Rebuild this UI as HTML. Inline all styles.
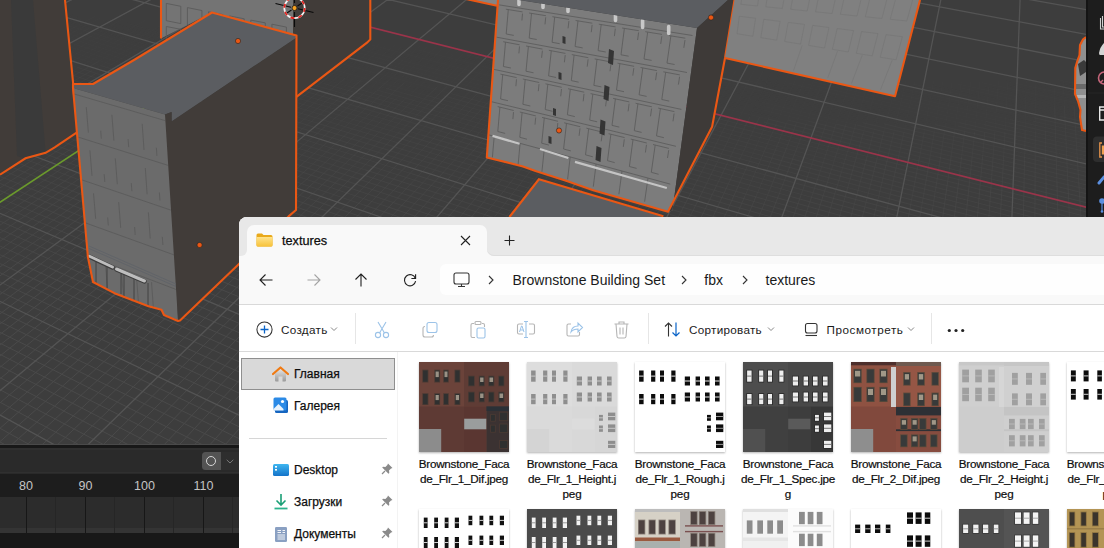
<!DOCTYPE html>
<html><head><meta charset="utf-8">
<style>
*{margin:0;padding:0;box-sizing:border-box}
html,body{width:1104px;height:548px;overflow:hidden;background:#3f3f3f;font-family:"Liberation Sans",sans-serif}
.fn{position:absolute;top:35px;width:40px;margin-left:-20px;text-align:center;color:#c4c4c4;font-size:12.5px;line-height:14px}
.t{position:absolute;white-space:nowrap;color:#0d0d0d;line-height:16px;-webkit-text-stroke:0.25px #0d0d0d}
.tn{-webkit-text-stroke:0 !important;color:#1a1a1a !important}
.lb{position:absolute;width:120px;text-align:center;white-space:nowrap;color:#0d0d0d;font-size:11.7px;letter-spacing:-0.24px;line-height:15px;-webkit-text-stroke:0.2px #0d0d0d}
</style></head><body>
<svg id="vp" width="1104" height="548" viewBox="0 0 1104 548" style="position:absolute;left:0;top:0">
<defs><clipPath id="vpc"><rect x="0" y="0" width="1086" height="444"/></clipPath></defs>
<g clip-path="url(#vpc)">
<rect x="0" y="0" width="1086" height="444" fill="#3d3d3d"/>
<path d="M1082.5 75.6L1107.2 80.6M4.4 12.9L-18.6 23.8M1082.3 78.6L1107.6 83.8M6.4 15.8L-18.4 27.7M1083.3 81.9L1108.0 87.0M7.2 19.4L-19.9 32.5M1057.7 79.7L1108.4 90.2M26.6 14.0L-19.8 36.6M1059.3 83.1L1108.8 93.4M29.7 16.4L-19.7 40.7M1035.4 84.4L1109.6 100.1M49.7 14.6L-19.4 49.1M1006.2 81.4L1107.0 102.8M53.5 16.7L-19.2 53.4M1008.7 85.2L1107.4 106.2M57.4 18.9L-19.1 57.8M981.9 82.7L1107.8 109.6M72.7 15.3L-18.9 62.2M985.0 86.6L1108.3 113.1M77.1 17.3L-18.8 66.8M957.3 83.9L1108.7 116.6M81.5 19.2L6.4 58.3M960.8 87.9L1084.4 114.8M95.6 16.1L4.4 64.1M933.2 85.2L1084.3 118.3M100.4 17.9L5.5 68.3M911.8 83.8L1060.4 116.5M90.7 27.5L24.3 63.0M885.8 84.7L1033.7 117.7M123.0 19.0L51.7 57.8M882.3 87.3L1032.8 121.1M113.3 28.8L46.9 65.3M861.5 86.0L1009.7 119.5M117.9 30.9L49.3 69.0M832.6 82.9L1008.5 122.8M146.1 19.8L75.3 59.5M813.1 81.9L985.9 121.4M136.0 30.2L69.6 67.7M807.9 84.1L984.0 124.6M140.9 32.2L72.4 71.2M786.7 82.7L959.2 122.6M169.2 20.7L98.8 61.3M757.0 79.3L957.2 125.9M158.7 31.7L92.3 70.3M738.4 78.5L935.5 124.6M163.8 33.6L95.5 73.7M713.9 79.7L911.4 126.6M180.7 33.6L113.8 73.6M683.4 76.0L883.8 123.8M186.0 35.5L140.3 63.1M664.7 75.1L862.5 122.6M198.0 33.4L132.7 73.2M632.1 70.8L856.9 125.1M203.5 35.2L136.6 76.4M614.8 70.1L836.4 124.1M215.0 33.3L151.1 73.1M583.3 66.0L808.0 121.1M220.6 35.1L155.2 76.2M565.5 65.2L787.5 120.0M226.2 36.9L181.6 65.3M549.0 64.8L768.0 119.1M237.5 35.2L173.5 76.3M517.2 60.4L763.8 122.1M243.2 36.9L177.8 79.4M466.6 54.9L712.7 117.3M260.0 37.1L195.8 79.7M451.0 54.6L694.0 116.6M265.9 38.9L222.2 68.2M418.4 49.9L664.5 113.1M276.1 37.7L212.7 80.8M402.0 49.3L645.5 112.3M282.1 39.5L238.9 69.1M369.0 44.4L615.4 108.6M292.6 38.1L230.2 81.5M354.1 44.2L597.6 108.0M298.6 39.9L235.0 84.5M319.5 38.7L591.0 110.4M309.0 38.6L247.4 82.3M305.0 38.5L548.9 103.4M315.1 40.4L252.4 85.4M295.0 39.5L540.9 105.4M325.2 39.2L264.5 83.4M245.5 33.6L491.8 100.6M337.6 42.8L295.7 74.0M231.4 33.5L450.6 93.5M347.6 41.7L286.7 87.7M197.1 27.9L443.5 95.8M353.8 43.5L312.6 75.0M182.2 27.5L426.1 95.3M363.7 42.5L303.5 89.1M168.5 27.4L385.7 88.2M369.6 44.7L328.6 76.8M157.9 28.3L376.8 90.0M379.3 43.8L319.5 91.3M127.0 23.3L347.5 86.0M385.7 45.6L345.2 78.2M103.2 20.4L323.7 83.5M395.3 44.8L336.1 93.1M102.7 24.1L298.9 80.7M401.7 46.7L361.7 79.8M52.4 17.2L268.5 80.5M420.6 45.4L363.4 94.0M53.2 21.3L245.3 78.1M427.1 47.2L388.4 80.6M29.4 18.2L225.2 76.5M436.4 46.7L379.6 96.3M5.8 15.1L201.5 73.9M443.0 48.6L404.6 82.6M4.6 18.8L172.4 69.6M451.7 48.6L394.9 99.7M-18.5 15.8L173.2 74.3M460.4 48.6L404.5 99.7M-19.2 19.6L148.7 71.3M469.1 48.6L414.0 99.7M-19.9 23.6L124.2 68.3M475.1 51.2L437.6 86.5M-19.0 28.0L101.0 65.6M483.8 51.2L446.9 86.5M-18.8 36.7L76.9 67.2M501.3 51.2L447.7 104.2M-19.5 40.9L52.4 64.0M507.3 53.9L470.8 90.6M-18.6 45.7L29.3 61.2M516.1 53.9L480.2 90.6M-19.3 50.0L28.6 65.7M524.9 53.9L489.6 90.6M-18.4 55.0L5.5 62.9M533.7 54.0L499.0 90.7M542.5 54.0L491.3 109.0M548.6 56.9L513.8 95.1M557.4 56.9L523.2 95.1M566.3 56.9L532.7 95.1M584.0 57.0L551.6 95.2M590.2 60.2L557.1 100.0M599.0 60.2L566.7 100.0M607.9 60.2L576.2 100.0M616.8 60.2L585.8 100.0M625.7 60.2L595.3 100.0M632.0 63.7L601.0 105.2M641.0 63.7L610.6 105.2M650.3 63.2L620.6 104.8M654.0 84.0L639.9 104.8M674.7 67.0L645.7 110.5M683.7 67.0L655.5 110.5M692.7 67.0L665.2 110.5M701.7 67.0L674.9 110.5M710.7 67.1L684.6 110.6M719.7 67.1L694.4 110.6M726.4 71.2L700.6 116.8M735.5 71.2L710.4 116.8M753.6 71.3L730.1 116.9M762.7 71.3L739.9 116.9M771.8 71.3L749.8 116.9M780.9 71.3L759.6 116.9M790.0 71.3L769.4 116.9M797.1 75.9L776.3 123.8M806.2 75.9L786.2 123.8M815.4 75.9L796.2 123.8M824.6 75.9L806.2 123.8M842.9 76.0L826.1 123.9M852.1 76.0L836.0 123.9M861.2 76.0L846.0 123.9M870.4 76.0L855.9 123.9M878.1 81.1L863.7 131.5M887.4 81.1L873.8 131.5M896.6 81.1L883.9 131.5M905.9 81.1L894.0 131.6M915.1 81.1L904.1 131.6M933.6 81.2L924.3 131.6M942.9 81.2L934.3 131.6M952.2 81.2L944.4 131.7M961.4 81.2L954.5 131.7M970.7 81.2L964.6 131.7M979.9 81.2L974.7 131.7M989.2 81.2L984.8 131.7M998.4 81.3L994.9 131.7M1007.7 81.3L1005.0 131.8M1026.2 80.7L1025.2 130.9M1035.5 80.7L1035.3 131.0M1044.8 80.8L1045.4 131.0M1054.0 80.8L1054.7 105.9M1063.3 80.8L1064.4 105.9M1072.5 80.8L1074.1 105.9M1081.9 82.3L1083.9 107.8M1091.0 80.0L1093.3 104.9M1101.0 87.6L1104.0 114.4" stroke="#4a4a4a" stroke-opacity="0.125" stroke-width="1" fill="none"/>
<path d="M6.4 58.3L-18.6 71.4M1084.4 114.8L1109.1 120.2M4.4 64.1L-18.4 76.1M1084.3 118.3L1109.5 123.8M5.5 68.3L-18.3 80.8M1060.4 116.5L1110.0 127.5M24.3 63.0L-19.9 86.7M1033.7 117.7L1107.6 134.2M51.7 57.8L-19.6 96.7M1032.8 121.1L1108.1 138.0M46.9 65.3L-19.5 101.8M1009.7 119.5L1108.5 141.8M49.3 69.0L-19.3 107.0M1008.5 122.8L1108.9 145.7M75.3 59.5L4.5 99.1M985.9 121.4L1109.4 149.6M69.6 67.7L3.2 105.2M984.0 124.6L1084.7 147.8M72.4 71.2L4.0 110.2M959.2 122.6L1082.4 151.1M98.8 61.3L28.3 101.8M957.2 125.9L1082.4 155.0M92.3 70.3L25.8 108.9M935.5 124.6L1058.6 153.4M95.5 73.7L50.0 100.4M911.4 126.6L1034.8 155.8M113.8 73.6L69.3 100.3M883.8 123.8L1009.0 153.7M140.3 63.1L71.7 104.6M862.5 122.6L1010.8 158.2M132.7 73.2L67.5 113.1M856.9 125.1L981.8 155.3M136.6 76.4L92.0 103.9M836.4 124.1L984.1 160.0M151.1 73.1L87.2 112.9M808.0 121.1L957.8 157.8M155.2 76.2L111.7 103.7M787.5 120.0L935.5 156.5M181.6 65.3L114.8 107.8M768.0 119.1L938.3 161.4M173.5 76.3L130.8 103.7M763.8 122.1L911.8 159.1M177.8 79.4L134.2 107.8M712.7 117.3L885.0 160.9M195.8 79.7L153.1 108.1M694.0 116.6L864.0 159.9M222.2 68.2L156.7 112.1M664.5 113.1L861.3 163.6M212.7 80.8L170.4 109.5M645.5 112.3L840.2 162.6M238.9 69.1L174.3 113.5M615.4 108.6L812.6 159.9M230.2 81.5L188.6 110.3M597.6 108.0L792.4 159.1M235.0 84.5L192.6 114.3M591.0 110.4L763.8 156.0M247.4 82.3L206.4 111.5M548.9 103.4L744.1 155.3M252.4 85.4L210.7 115.4M540.9 105.4L737.7 158.1M264.5 83.4L224.1 112.8M491.8 100.6L688.9 154.1M295.7 74.0L232.9 120.8M450.6 93.5L669.8 153.6M286.7 87.7L246.0 118.3M443.5 95.8L640.6 150.2M312.6 75.0L250.6 122.4M426.1 95.3L621.3 149.5M303.5 89.1L263.4 120.2M385.7 88.2L603.0 149.0M328.6 76.8L267.1 125.0M376.8 90.0L571.3 144.9M319.5 91.3L279.6 123.0M347.5 86.0L567.9 148.6M345.2 78.2L284.4 127.1M323.7 83.5L544.1 146.6M336.1 93.1L296.6 125.3M298.9 80.7L519.5 144.4M361.7 79.8L301.6 129.5M268.5 80.5L460.6 136.9M363.4 94.0L325.2 126.5M245.3 78.1L437.4 134.8M388.4 80.6L330.3 130.7M225.2 76.5L420.9 134.8M379.6 96.3L341.8 129.5M201.5 73.9L397.2 132.6M404.6 82.6L347.0 133.7M172.4 69.6L364.1 127.6M394.9 99.7L357.1 133.7M173.2 74.3L340.9 125.4M404.5 99.7L367.2 133.8M148.7 71.3L316.7 123.0M414.0 99.7L377.3 133.8M124.2 68.3L292.3 120.4M437.6 86.5L381.4 139.5M101.0 65.6L293.1 125.7M446.9 86.5L391.5 139.5M76.9 67.2L244.5 120.5M447.7 104.2L411.9 139.5M52.4 64.0L220.1 117.8M470.8 90.6L434.3 127.3M29.3 61.2L197.0 115.5M480.2 90.6L444.3 127.3M28.6 65.7L172.6 112.7M489.6 90.6L454.3 127.4M5.5 62.9L149.4 110.3M499.0 90.7L446.9 145.7M-19.2 59.5L148.9 115.3M491.3 109.0L457.2 145.7M-19.9 64.1L124.3 112.4M513.8 95.1L478.9 133.3M-19.0 69.3L100.7 109.8M523.2 95.1L489.0 133.3M-19.7 74.0L76.1 106.7M532.7 95.1L499.1 133.3M-19.5 84.4L52.4 109.4M551.6 95.2L519.3 133.4M-18.6 90.0L29.3 106.8M557.1 100.0L524.1 139.7M-19.3 95.1L4.5 103.5M566.7 100.0L534.3 139.8M576.2 100.0L544.5 139.8M585.8 100.0L554.7 139.8M595.3 100.0L564.9 139.8M601.0 105.2L569.9 146.8M610.6 105.2L580.3 146.8M620.6 104.8L590.9 146.4M639.9 104.8L611.5 146.4M645.7 110.5L616.8 154.0M655.5 110.5L627.2 154.0M665.2 110.5L637.7 154.0M674.9 110.5L648.1 154.0M684.6 110.6L658.6 154.1M694.4 110.6L669.0 154.1M700.6 116.8L674.8 162.4M710.4 116.8L685.4 162.4M730.1 116.9L706.5 162.5M739.9 116.9L717.1 162.5M749.8 116.9L727.7 162.5M759.6 116.9L738.3 162.5M769.4 116.9L748.9 162.5M776.3 123.8L765.9 147.7M786.2 123.8L776.3 147.8M796.2 123.8L786.6 147.8M806.2 123.8L797.0 147.8M826.1 123.9L809.2 171.8M836.0 123.9L820.0 171.8M846.0 123.9L830.7 171.8M855.9 123.9L841.5 171.8M863.7 131.5L856.5 156.7M873.8 131.5L867.0 156.8M883.9 131.5L877.5 156.8M894.0 131.6L888.0 156.8M904.1 131.6L898.5 156.8M924.3 131.6L919.6 156.8M934.3 131.6L930.1 156.9M944.4 131.7L940.6 156.9M954.5 131.7L951.1 156.9M964.6 131.7L961.6 156.9M974.7 131.7L972.1 156.9M984.8 131.7L982.6 157.0M994.9 131.7L993.1 157.0M1005.0 131.8L1003.6 157.0M1025.2 130.9L1024.7 156.1M1035.3 131.0L1035.2 156.1M1045.4 131.0L1045.7 156.1M1054.7 105.9L1056.2 156.1M1064.4 105.9L1066.7 156.1M1074.1 105.9L1077.2 156.2M1083.9 107.8L1087.9 158.8M1093.3 104.9L1098.0 154.7M1104.0 114.4L1107.0 141.2" stroke="#4a4a4a" stroke-opacity="0.250" stroke-width="1" fill="none"/>
<path d="M4.5 99.1L-19.1 112.3M3.2 105.2L-19.0 117.7M1084.7 147.8L1109.8 153.6M4.0 110.2L-18.8 123.3M1082.4 151.1L1107.0 156.8M28.3 101.8L-18.6 128.9M1082.4 155.0L1107.4 160.9M25.8 108.9L-18.4 134.6M1058.6 153.4L1107.9 165.0M50.0 100.4L-18.3 140.4M1034.8 155.8L1108.8 173.4M69.3 100.3L2.4 140.3M1009.0 153.7L1109.3 177.7M71.7 104.6L3.1 146.0M1010.8 158.2L1109.7 182.0M67.5 113.1L23.9 139.6M981.8 155.3L1106.7 185.6M92.0 103.9L25.2 145.1M984.1 160.0L1082.6 184.0M87.2 112.9L23.4 152.7M957.8 157.8L1082.7 188.4M111.7 103.7L46.3 144.8M935.5 156.5L1058.8 186.9M114.8 107.8L48.0 150.3M938.3 161.4L1060.0 191.6M130.8 103.7L66.7 144.9M911.8 159.1L1035.1 189.9M134.2 107.8L68.8 150.3M885.0 160.9L1008.0 192.1M153.1 108.1L88.9 150.7M864.0 159.9L985.5 190.9M156.7 112.1L91.3 156.1M861.3 163.6L984.4 195.2M170.4 109.5L106.9 152.5M840.2 162.6L961.9 194.1M174.3 113.5L109.6 157.9M812.6 159.9L935.9 192.0M188.6 110.3L126.1 153.7M792.4 159.1L938.5 197.4M192.6 114.3L129.0 159.0M763.8 156.0L911.9 195.2M206.4 111.5L144.9 155.2M744.1 155.3L890.4 194.2M210.7 115.4L148.1 160.4M737.7 158.1L885.3 197.7M224.1 112.8L163.4 157.0M688.9 154.1L836.7 194.3M232.9 120.8L191.1 152.0M669.8 153.6L815.9 193.6M246.0 118.3L205.4 149.0M640.6 150.2L813.1 197.7M250.6 122.4L209.3 153.9M621.3 149.5L792.1 196.9M263.4 120.2L223.3 151.2M603.0 149.0L771.9 196.3M267.1 125.0L226.1 157.2M571.3 144.9L741.6 192.9M279.6 123.0L239.7 154.7M567.9 148.6L714.9 190.4M284.4 127.1L243.9 159.8M544.1 146.6L715.6 195.7M296.6 125.3L257.1 157.5M519.5 144.4L691.2 193.9M301.6 129.5L261.5 162.6M460.6 136.9L628.8 186.1M325.2 126.5L287.0 158.9M437.4 134.8L605.4 184.5M330.3 130.7L291.6 164.1M420.9 134.8L592.2 185.8M341.8 129.5L303.9 162.6M397.2 132.6L568.4 184.0M347.0 133.7L308.6 167.8M364.1 127.6L555.9 185.6M357.1 133.7L319.3 167.8M340.9 125.4L532.6 183.9M367.2 133.8L329.9 167.8M316.7 123.0L508.6 182.0M377.3 133.8L340.6 167.8M292.3 120.4L484.5 180.0M381.4 139.5L343.9 174.8M293.1 125.7L461.2 178.2M391.5 139.5L354.6 174.8M244.5 120.5L412.0 173.8M411.9 139.5L376.2 174.9M220.1 117.8L387.9 171.6M434.3 127.3L397.8 164.0M197.0 115.5L364.7 169.7M444.3 127.3L408.4 164.0M172.6 112.7L340.5 167.5M454.3 127.4L419.0 164.1M149.4 110.3L317.3 165.5M446.9 145.7L412.2 182.4M148.9 115.3L293.0 163.2M457.2 145.7L423.1 182.5M124.3 112.4L268.6 160.8M478.9 133.3L444.1 171.5M100.7 109.8L244.3 158.3M489.0 133.3L454.8 171.5M76.1 106.7L219.9 155.8M499.1 133.3L465.5 171.5M52.4 109.4L196.2 159.4M519.3 133.4L487.0 171.5M29.3 106.8L173.0 157.2M524.1 139.7L491.1 179.5M4.5 103.5L147.7 154.3M534.3 139.8L501.9 179.5M-18.3 100.9L124.7 152.1M544.5 139.8L512.8 179.6M-19.1 106.2L100.2 149.3M554.7 139.8L523.6 179.6M-19.9 111.6L75.6 146.5M564.9 139.8L534.5 179.6M-18.9 117.8L52.3 144.1M569.9 146.8L538.9 188.3M-19.7 123.5L51.5 150.0M580.3 146.8L549.9 188.3M-18.7 129.9L28.8 147.7M590.9 146.4L561.2 188.0M611.5 146.4L583.2 188.0M616.8 154.0L602.3 175.7M627.2 154.0L599.0 197.5M637.7 154.0L610.2 197.5M648.1 154.0L621.4 197.5M658.6 154.1L632.5 197.6M669.0 154.1L643.7 197.6M674.8 162.4L661.9 185.2M685.4 162.4L672.8 185.2M706.5 162.5L694.8 185.2M717.1 162.5L705.7 185.3M727.7 162.5L716.7 185.3M738.3 162.5L727.7 185.3M748.9 162.5L738.6 185.3M765.9 147.7L745.1 195.6M776.3 147.8L756.3 195.6M786.6 147.8L767.4 195.7M797.0 147.8L778.5 195.7M809.2 171.8L800.8 195.7M820.0 171.8L812.0 195.8M830.7 171.8L823.1 195.8M841.5 171.8L834.2 195.8M856.5 156.7L842.2 207.2M867.0 156.8L853.5 207.2M877.5 156.8L864.8 207.2M888.0 156.8L876.2 207.2M898.5 156.8L887.5 207.3M919.6 156.8L910.2 207.3M930.1 156.9L921.5 207.3M940.6 156.9L932.8 207.4M951.1 156.9L947.6 182.1M961.6 156.9L958.6 182.2M972.1 156.9L969.5 182.2M982.6 157.0L980.4 182.2M993.1 157.0L991.3 182.2M1003.6 157.0L1002.3 182.3M1024.7 156.1L1024.1 181.2M1035.2 156.1L1035.1 181.2M1045.7 156.1L1046.0 181.2M1056.2 156.1L1056.9 181.2M1066.7 156.1L1067.8 181.2M1077.2 156.2L1078.7 181.3M1087.9 158.8L1089.9 184.3M1098.0 154.7L1100.4 179.6M1107.0 141.2L1110.0 168.0" stroke="#4a4a4a" stroke-opacity="0.375" stroke-width="1" fill="none"/>
<path d="M2.4 140.3L-19.9 153.7M3.1 146.0L-19.8 159.9M23.9 139.6L-19.6 166.2M25.2 145.1L-19.4 172.6M1082.6 184.0L1107.2 190.0M23.4 152.7L-19.2 179.2M1082.7 188.4L1107.7 194.5M46.3 144.8L-19.0 185.9M1058.8 186.9L1108.1 199.1M48.0 150.3L3.4 178.6M1060.0 191.6L1108.6 203.7M66.7 144.9L2.7 186.1M1035.1 189.9L1109.1 208.4M68.8 150.3L3.3 192.8M1008.0 192.1L1106.5 217.0M88.9 150.7L24.7 193.3M985.5 190.9L1082.7 215.7M91.3 156.1L47.6 185.4M984.4 195.2L1082.8 220.5M106.9 152.5L64.6 181.2M961.9 194.1L1059.2 219.3M109.6 157.9L66.5 187.5M935.9 192.0L1059.1 224.1M126.1 153.7L84.5 182.6M938.5 197.4L1035.9 222.9M129.0 159.0L86.6 188.7M911.9 195.2L1010.7 221.2M144.9 155.2L103.9 184.3M890.4 194.2L1012.4 226.7M148.1 160.4L106.3 190.4M885.3 197.7L983.7 224.0M163.4 157.0L122.9 186.4M836.7 194.3L959.9 227.8M191.1 152.0L128.3 198.8M815.9 193.6L937.7 226.9M205.4 149.0L144.5 195.0M813.1 197.7L936.3 231.7M209.3 153.9L147.4 201.3M792.1 196.9L914.1 230.8M223.3 151.2L163.1 197.8M771.9 196.3L892.6 230.1M226.1 157.2L185.1 189.3M741.6 192.9L887.5 234.0M239.7 154.7L179.8 202.3M714.9 190.4L861.9 232.2M243.9 159.8L203.4 192.4M715.6 195.7L838.0 230.8M257.1 157.5L217.6 189.7M691.2 193.9L813.8 229.3M261.5 162.6L221.4 195.7M628.8 186.1L772.9 228.4M287.0 158.9L248.8 191.4M605.4 184.5L749.5 227.1M291.6 164.1L252.9 197.4M592.2 185.8L739.0 229.6M303.9 162.6L266.0 195.7M568.4 184.0L715.2 228.1M308.6 167.8L270.2 201.8M555.9 185.6L699.7 229.1M319.3 167.8L281.4 201.9M532.6 183.9L676.4 227.8M329.9 167.8L292.7 201.9M508.6 182.0L652.5 226.3M340.6 167.8L303.9 201.9M484.5 180.0L628.6 224.7M343.9 174.8L306.4 210.1M461.2 178.2L605.3 223.3M354.6 174.8L317.7 210.2M412.0 173.8L555.7 219.5M376.2 174.9L340.4 210.2M387.9 171.6L531.7 217.7M397.8 164.0L361.3 200.7M364.7 169.7L508.5 216.3M408.4 164.0L372.5 200.7M340.5 167.5L484.4 214.5M419.0 164.1L383.7 200.8M317.3 165.5L461.2 212.9M412.2 182.4L394.9 200.8M293.0 163.2L437.0 211.1M423.1 182.5L389.0 219.2M268.6 160.8L412.8 209.1M444.1 171.5L409.2 209.6M244.3 158.3L387.9 206.9M454.8 171.5L420.6 209.7M219.9 155.8L363.7 204.9M465.5 171.5L431.9 209.7M196.2 159.4L316.0 201.0M487.0 171.5L454.6 209.7M173.0 157.2L292.8 199.2M491.1 179.5L458.1 219.3M147.7 154.3L290.8 205.0M501.9 179.5L469.6 219.3M124.7 152.1L267.7 203.3M512.8 179.6L481.1 219.4M100.2 149.3L243.3 201.0M523.6 179.6L492.6 219.4M75.6 146.5L218.9 198.7M534.5 179.6L504.1 219.4M52.3 144.1L194.7 196.5M538.9 188.3L523.4 209.0M51.5 150.0L170.3 194.1M549.9 188.3L534.7 209.1M28.8 147.7L147.4 192.3M561.2 188.0L531.5 229.6M-18.5 142.4L99.5 187.7M583.2 188.0L554.8 229.6M-19.3 148.5L75.1 185.1M602.3 175.7L573.4 219.2M-18.2 155.5L76.0 192.4M599.0 197.5L584.9 219.2M-19.1 161.9L51.2 189.7M610.2 197.5L596.5 219.3M-20.0 168.4L26.9 187.1M621.4 197.5L608.0 219.3M-18.8 175.8L4.6 185.3M632.5 197.6L619.5 219.3M643.7 197.6L631.0 219.3M661.9 185.2L636.1 230.8M672.8 185.2L647.8 230.8M694.8 185.2L671.2 230.8M705.7 185.3L682.9 230.9M716.7 185.3L694.6 230.9M727.7 185.3L706.4 230.9M738.6 185.3L718.1 230.9M745.1 195.6L734.7 219.6M756.3 195.6L746.3 219.6M767.4 195.7L757.8 219.6M778.5 195.7L769.3 219.6M800.8 195.7L792.4 219.7M812.0 195.8L803.9 219.7M823.1 195.8L815.5 219.7M834.2 195.8L827.0 219.8M842.2 207.2L835.0 232.4M853.5 207.2L846.7 232.4M864.8 207.2L858.5 232.4M876.2 207.2L870.2 232.5M887.5 207.3L882.0 232.5M910.2 207.3L905.5 232.5M921.5 207.3L917.2 232.6M932.8 207.4L929.0 232.6M947.6 182.1L940.7 232.6M958.6 182.2L952.5 232.6M969.5 182.2L964.3 232.7M980.4 182.2L976.0 232.7M991.3 182.2L987.8 232.7M1002.3 182.3L999.5 232.7M1024.1 181.2L1023.1 231.4M1035.1 181.2L1034.8 231.4M1046.0 181.2L1046.6 231.4M1056.9 181.2L1058.3 231.5M1067.8 181.2L1070.1 231.5M1078.7 181.3L1081.8 231.5M1089.9 184.3L1091.9 209.7M1100.4 179.6L1102.8 204.5" stroke="#4a4a4a" stroke-opacity="0.500" stroke-width="1" fill="none"/>
<path d="M3.4 178.6L-18.9 192.8M2.7 186.1L-18.7 199.8M3.3 192.8L-18.5 206.9M24.7 193.3L-18.1 221.7M1082.7 215.7L1106.9 221.9M47.6 185.4L-17.8 229.3M1082.8 220.5L1107.4 226.8M64.6 181.2L1.2 224.3M1059.2 219.3L1107.9 231.8M66.5 187.5L1.8 231.8M1059.1 224.1L1108.4 236.9M84.5 182.6L22.1 225.9M1035.9 222.9L1108.9 242.1M86.6 188.7L44.3 218.5M1010.7 221.2L1109.4 247.3M103.9 184.3L42.4 228.0M1012.4 226.7L1110.0 252.6M106.3 190.4L64.6 220.4M983.7 224.0L1082.1 250.4M122.9 186.4L62.2 230.6M959.9 227.8L1058.4 254.6M128.3 198.8L86.4 230.0M937.7 226.9L1035.1 253.6M144.5 195.0L103.9 225.6M936.3 231.7L1034.8 258.9M147.4 201.3L106.1 232.8M914.1 230.8L1011.7 257.9M163.1 197.8L122.9 228.9M892.6 230.1L989.1 257.1M185.1 189.3L123.6 237.5M887.5 234.0L984.8 261.5M179.8 202.3L139.9 234.0M861.9 232.2L959.9 260.0M203.4 192.4L162.8 225.0M838.0 230.8L936.0 258.8M217.6 189.7L158.4 238.0M813.8 229.3L936.4 264.6M221.4 195.7L181.3 228.9M772.9 228.4L893.0 263.6M248.8 191.4L191.5 240.1M749.5 227.1L869.6 262.5M252.9 197.4L214.1 230.8M739.0 229.6L861.3 266.0M266.0 195.7L228.2 228.8M715.2 228.1L837.5 264.8M270.2 201.8L231.8 235.9M699.7 229.1L819.5 265.4M281.4 201.9L243.6 235.9M676.4 227.8L796.2 264.4M292.7 201.9L255.4 236.0M652.5 226.3L772.5 263.2M303.9 201.9L267.2 236.0M628.6 224.7L748.7 261.9M306.4 210.1L268.9 245.5M605.3 223.3L725.3 260.8M317.7 210.2L280.8 245.5M555.7 219.5L699.3 265.1M340.4 210.2L304.7 245.5M531.7 217.7L675.5 263.9M361.3 200.7L324.7 237.4M508.5 216.3L652.2 262.8M372.5 200.7L336.5 237.4M484.4 214.5L628.3 261.5M383.7 200.8L348.3 237.5M461.2 212.9L605.1 260.3M394.9 200.8L360.1 237.5M437.0 211.1L581.1 258.9M389.0 219.2L372.0 237.5M412.8 209.1L557.1 257.5M409.2 209.6L374.4 247.8M387.9 206.9L531.5 255.5M420.6 209.7L386.4 247.8M363.7 204.9L507.4 254.0M431.9 209.7L398.3 247.9M316.0 201.0L459.8 251.0M454.6 209.7L422.3 247.9M292.8 199.2L436.5 249.7M458.1 219.3L425.0 259.1M290.8 205.0L410.1 247.3M469.6 219.3L437.2 259.1M267.7 203.3L386.9 245.9M481.1 219.4L449.4 259.1M243.3 201.0L362.6 244.1M492.6 219.4L461.5 259.2M218.9 198.7L338.2 242.3M504.1 219.4L473.7 259.2M194.7 196.5L313.4 240.2M523.4 209.0L492.3 250.6M170.3 194.1L289.1 238.3M534.7 209.1L504.4 250.6M147.4 192.3L266.0 236.8M531.5 229.6L516.6 250.3M99.5 187.7L217.4 232.9M554.8 229.6L540.6 250.4M75.1 185.1L193.1 230.8M573.4 219.2L544.5 262.7M76.0 192.4L170.2 229.3M584.9 219.2L556.7 262.7M51.2 189.7L168.4 236.1M596.5 219.3L569.0 262.8M26.9 187.1L144.2 234.0M608.0 219.3L581.2 262.8M4.6 185.3L121.5 232.6M619.5 219.3L593.4 262.8M-19.7 182.6L97.3 230.4M631.0 219.3L605.7 262.9M-18.6 190.4L74.2 228.7M636.1 230.8L623.2 253.6M-19.5 197.5L50.1 226.5M647.8 230.8L635.3 253.6M-19.3 213.0L4.7 223.2M671.2 230.8L659.4 253.6M682.9 230.9L671.5 253.7M694.6 230.9L683.6 253.7M706.4 230.9L695.7 253.7M718.1 230.9L707.8 253.7M734.7 219.6L714.0 267.5M746.3 219.6L726.3 267.5M757.8 219.6L738.6 267.5M769.3 219.6L750.9 267.5M792.4 219.7L775.6 267.6M803.9 219.7L787.9 267.6M815.5 219.7L800.2 267.6M827.0 219.8L812.6 267.7M835.0 232.4L827.8 257.6M846.7 232.4L839.9 257.6M858.5 232.4L852.1 257.7M870.2 232.5L864.3 257.7M882.0 232.5L876.4 257.7M905.5 232.5L900.8 257.8M917.2 232.6L912.9 257.8M929.0 232.6L925.1 257.8M940.7 232.6L937.3 257.9M952.5 232.6L949.5 257.9M964.3 232.7L961.6 257.9M976.0 232.7L973.8 257.9M987.8 232.7L986.0 258.0M999.5 232.7L998.2 258.0M1023.1 231.4L1022.6 256.5M1034.8 231.4L1034.7 256.5M1046.6 231.4L1046.9 256.5M1058.3 231.5L1059.0 256.6M1070.1 231.5L1071.2 256.6M1081.8 231.5L1083.4 256.6M1091.9 209.7L1095.9 260.7M1102.8 204.5L1107.5 254.3" stroke="#4a4a4a" stroke-opacity="0.625" stroke-width="1" fill="none"/>
<path d="M1.2 224.3L-19.9 238.6M1.8 231.8L-19.7 246.6M22.1 225.9L-19.5 254.8M44.3 218.5L-19.3 263.2M42.4 228.0L1.4 257.2M64.6 220.4L2.0 265.5M1082.1 250.4L1106.7 257.0M62.2 230.6L21.8 260.0M1058.4 254.6L1107.7 268.0M86.4 230.0L44.5 261.2M1035.1 253.6L1108.2 273.6M103.9 225.6L42.9 271.6M1034.8 258.9L1108.7 279.3M106.1 232.8L64.8 264.4M1011.7 257.9L1109.3 285.1M122.9 228.9L82.8 259.9M989.1 257.1L1085.7 284.2M123.6 237.5L82.6 269.7M984.8 261.5L1057.7 282.0M139.9 234.0L100.0 265.6M959.9 260.0L1057.9 287.9M162.8 225.0L102.1 273.9M936.0 258.8L1034.0 286.9M158.4 238.0L118.9 270.2M936.4 264.6L1009.9 285.9M181.3 228.9L141.3 262.0M893.0 263.6L989.0 291.7M191.5 240.1L153.3 272.5M869.6 262.5L965.6 290.9M214.1 230.8L175.4 264.2M861.3 266.0L959.2 295.1M228.2 228.8L171.4 278.5M837.5 264.8L935.3 294.2M231.8 235.9L193.5 270.0M819.5 265.4L915.4 294.4M243.6 235.9L205.8 270.0M796.2 264.4L892.1 293.6M255.4 236.0L218.1 270.0M772.5 263.2L892.4 300.1M267.2 236.0L230.4 270.0M748.7 261.9L868.7 299.2M268.9 245.5L231.4 280.8M725.3 260.8L845.4 298.4M280.8 245.5L243.9 280.8M699.3 265.1L795.0 295.6M304.7 245.5L268.9 280.9M675.5 263.9L771.3 294.6M324.7 237.4L288.2 274.1M652.2 262.8L772.0 301.5M336.5 237.4L300.6 274.1M628.3 261.5L748.2 300.6M348.3 237.5L313.0 274.2M605.1 260.3L725.0 299.8M360.1 237.5L325.4 274.2M581.1 258.9L701.2 298.8M372.0 237.5L337.8 274.2M557.1 257.5L677.3 297.8M374.4 247.8L339.5 286.0M531.5 255.5L651.1 295.9M386.4 247.8L352.1 286.0M507.4 254.0L627.2 294.9M398.3 247.9L364.7 286.1M459.8 251.0L579.6 292.7M422.3 247.9L390.0 286.1M436.5 249.7L556.2 291.7M425.0 259.1L408.5 279.0M410.1 247.3L529.4 289.5M437.2 259.1L421.0 279.0M386.9 245.9L506.1 288.5M449.4 259.1L433.5 279.0M362.6 244.1L481.9 287.2M461.5 259.2L446.0 279.1M338.2 242.3L457.6 285.8M473.7 259.2L458.5 279.1M313.4 240.2L432.1 283.9M492.3 250.6L461.3 292.1M289.1 238.3L407.9 282.5M504.4 250.6L474.0 292.1M266.0 236.8L384.6 281.4M516.6 250.3L486.9 291.9M217.4 232.9L335.3 278.1M540.6 250.4L512.3 292.0M193.1 230.8L311.1 276.5M544.5 262.7L530.0 284.5M170.2 229.3L288.0 275.4M556.7 262.7L542.6 284.5M168.4 236.1L262.2 273.2M569.0 262.8L555.2 284.5M144.2 234.0L238.0 271.5M581.2 262.8L567.8 284.5M121.5 232.6L215.1 270.4M593.4 262.8L580.4 284.6M97.3 230.4L190.9 268.7M605.7 262.9L593.0 284.6M74.2 228.7L167.0 267.1M623.2 253.6L597.4 299.1M50.1 226.5L142.9 265.3M635.3 253.6L610.2 299.2M4.7 223.2L100.4 264.1M659.4 253.6L635.9 299.2M-18.1 221.5L77.5 262.8M671.5 253.7L648.7 299.3M-19.0 229.3L52.7 260.6M683.6 253.7L661.6 299.3M-20.0 237.2L48.6 267.6M695.7 253.7L674.4 299.3M-18.8 246.3L28.6 267.5M707.8 253.7L687.3 299.3M-19.8 254.6L4.0 265.4M714.0 267.5L703.6 291.4M726.3 267.5L716.3 291.4M738.6 267.5L729.0 291.5M750.9 267.5L741.7 291.5M775.6 267.6L767.2 291.5M787.9 267.6L779.9 291.6M800.2 267.6L792.6 291.6M812.6 267.7L805.3 291.6M827.8 257.6L813.4 308.1M839.9 257.6L826.4 308.1M852.1 257.7L839.4 308.1M864.3 257.7L852.4 308.1M876.4 257.7L865.4 308.2M900.8 257.8L891.4 308.2M912.9 257.8L904.4 308.3M925.1 257.8L921.3 283.1M937.3 257.9L933.8 283.1M949.5 257.9L946.4 283.1M961.6 257.9L959.0 283.1M973.8 257.9L971.6 283.2M986.0 258.0L984.2 283.2M998.2 258.0L996.8 283.2M1022.6 256.5L1022.0 281.6M1034.7 256.5L1034.6 281.6M1046.9 256.5L1047.2 281.6M1059.0 256.6L1059.8 281.7M1071.2 256.6L1072.3 281.7M1083.4 256.6L1084.9 281.7M1095.9 260.7L1097.8 286.2M1107.5 254.3L1109.8 279.2" stroke="#4a4a4a" stroke-opacity="0.750" stroke-width="1" fill="none"/>
<path d="M1.4 257.2L-19.1 271.7M2.0 265.5L-18.9 280.5M21.8 260.0L-18.7 289.4M44.5 261.2L2.7 292.4M42.9 271.6L2.3 302.3M64.8 264.4L23.5 295.9M82.8 259.9L22.6 306.5M1085.7 284.2L1109.8 290.9M82.6 269.7L41.6 301.8M1057.7 282.0L1106.4 295.8M100.0 265.6L60.1 297.3M1057.9 287.9L1106.9 301.8M102.1 273.9L61.5 306.5M1034.0 286.9L1107.4 307.9M118.9 270.2L79.5 302.4M1009.9 285.9L1108.0 314.2M141.3 262.0L101.2 295.1M989.0 291.7L1061.1 312.9M153.3 272.5L115.2 305.0M965.6 290.9L1061.7 319.3M175.4 264.2L136.7 297.6M959.2 295.1L1032.6 317.0M171.4 278.5L133.5 311.6M935.3 294.2L1033.2 323.6M193.5 270.0L155.1 304.0M915.4 294.4L1011.3 323.4M205.8 270.0L168.0 304.0M892.1 293.6L987.9 322.8M218.1 270.0L180.8 304.1M892.4 300.1L964.4 322.2M230.4 270.0L193.7 304.1M868.7 299.2L964.8 329.0M231.4 280.8L193.9 316.1M845.4 298.4L941.4 328.4M243.9 280.8L207.0 316.2M795.0 295.6L890.8 326.1M268.9 280.9L233.2 316.2M771.3 294.6L867.2 325.4M288.2 274.1L251.7 310.8M772.0 301.5L867.8 332.6M300.6 274.1L264.7 310.8M748.2 300.6L844.2 331.9M313.0 274.2L277.7 310.9M725.0 299.8L820.9 331.4M325.4 274.2L290.7 310.9M701.2 298.8L797.2 330.7M337.8 274.2L303.7 310.9M677.3 297.8L773.4 330.0M339.5 286.0L322.1 305.1M651.1 295.9L746.8 328.3M352.1 286.0L335.0 305.1M627.2 294.9L723.1 327.6M364.7 286.1L331.2 324.2M579.6 292.7L675.5 326.0M390.0 286.1L357.6 324.3M556.2 291.7L652.0 325.3M408.5 279.0L375.5 318.8M529.4 289.5L648.7 331.8M421.0 279.0L388.6 318.8M506.1 288.5L625.3 331.2M433.5 279.0L401.8 318.8M481.9 287.2L601.2 330.3M446.0 279.1L414.9 318.9M457.6 285.8L577.0 329.3M458.5 279.1L428.1 318.9M432.1 283.9L550.7 327.6M461.3 292.1L445.8 312.9M407.9 282.5L526.6 326.7M474.0 292.1L458.8 312.9M384.6 281.4L503.2 326.0M486.9 291.9L472.0 312.7M335.3 278.1L453.2 323.3M512.3 292.0L483.9 333.6M311.1 276.5L429.1 322.2M530.0 284.5L501.1 328.0M288.0 275.4L405.8 321.5M542.6 284.5L514.4 328.0M262.2 273.2L379.4 319.5M555.2 284.5L527.7 328.0M238.0 271.5L355.3 318.4M567.8 284.5L541.0 328.0M215.1 270.4L332.1 317.7M580.4 284.6L554.3 328.1M190.9 268.7L308.0 316.5M593.0 284.6L567.7 328.1M167.0 267.1L283.0 315.0M597.4 299.1L584.5 321.9M142.9 265.3L259.0 313.8M610.2 299.2L597.7 322.0M100.4 264.1L196.2 305.0M635.9 299.2L624.1 322.0M77.5 262.8L173.0 304.1M648.7 299.3L637.3 322.1M52.7 260.6L148.4 302.5M661.6 299.3L650.6 322.1M48.6 267.6L140.1 308.0M674.4 299.3L663.8 322.1M28.6 267.5L99.8 299.4M687.3 299.3L677.0 322.1M4.0 265.4L75.2 297.7M703.6 291.4L682.8 339.3M-18.5 264.2L52.5 296.8M716.3 291.4L696.3 339.3M-19.5 272.9L51.6 306.0M729.0 291.5L709.8 339.3M-18.2 283.0L28.5 305.0M741.7 291.5L723.3 339.4M767.2 291.5L750.3 339.4M779.9 291.6L763.8 339.5M792.6 291.6L777.4 339.5M805.3 291.6L790.9 339.5M813.4 308.1L806.2 333.3M826.4 308.1L819.6 333.3M839.4 308.1L833.0 333.3M852.4 308.1L846.4 333.4M865.4 308.2L859.8 333.4M891.4 308.2L886.7 333.5M904.4 308.3L900.1 333.5M921.3 283.1L913.5 333.5M933.8 283.1L927.0 333.6M946.4 283.1L940.4 333.6M959.0 283.1L953.8 333.6M971.6 283.2L967.2 333.7M984.2 283.2L980.7 333.7M996.8 283.2L994.1 333.7M1022.0 281.6L1021.0 331.8M1034.6 281.6L1034.4 331.8M1047.2 281.6L1047.5 306.8M1059.8 281.7L1060.5 306.8M1072.3 281.7L1073.5 306.8M1084.9 281.7L1086.5 306.8M1097.8 286.2L1099.8 311.7" stroke="#4a4a4a" stroke-opacity="0.875" stroke-width="1" fill="none"/>
<path d="M2.7 292.4L-18.2 308.0M2.3 302.3L-18.0 317.6M23.5 295.9L-17.8 327.5M22.6 306.5L-17.5 337.6M41.6 301.8L-19.9 350.0M60.1 297.3L-19.7 360.7M61.5 306.5L-19.5 371.7M79.5 302.4L-19.3 383.0M101.2 295.1L-19.0 394.5M1061.1 312.9L1109.1 326.9M115.2 305.0L-18.5 418.6M1061.7 319.3L1109.7 333.5M136.7 297.6L-18.2 431.1M1032.6 317.0L1106.0 338.9M133.5 311.6L-18.0 444.0M1033.2 323.6L1106.6 345.6M155.1 304.0L-17.7 457.3M1011.3 323.4L1107.1 352.4M168.0 304.0L-2.3 457.3M987.9 322.8L1107.7 359.4M180.8 304.1L13.1 457.4M964.4 322.2L1108.3 366.5M193.7 304.1L28.5 457.4M964.8 329.0L1108.9 373.7M193.9 316.1L44.0 457.4M941.4 328.4L1109.5 381.0M207.0 316.2L59.4 457.5M890.8 326.1L1106.2 394.6M233.2 316.2L90.2 457.6M867.2 325.4L1106.8 402.3M251.7 310.8L105.6 457.6M867.8 332.6L1107.4 410.1M264.7 310.8L121.0 457.6M844.2 331.9L1108.0 418.1M277.7 310.9L136.5 457.7M820.9 331.4L1108.7 426.2M290.7 310.9L151.9 457.7M797.2 330.7L1109.3 434.4M303.7 310.9L167.3 457.8M773.4 330.0L1110.0 442.8M322.1 305.1L182.7 457.8M746.8 328.3L1105.8 449.8M335.0 305.1L198.2 457.9M723.1 327.6L1106.5 458.5M331.2 324.2L213.6 457.9M675.5 326.0L1058.9 459.4M357.6 324.3L244.5 458.0M652.0 325.3L1035.1 459.8M375.5 318.8L259.9 458.0M648.7 331.8L1006.6 458.6M388.6 318.8L275.3 458.1M625.3 331.2L982.8 459.1M401.8 318.8L290.8 458.1M601.2 330.3L959.0 459.5M414.9 318.9L306.2 458.1M577.0 329.3L935.2 460.0M428.1 318.9L321.7 458.2M550.7 327.6L906.8 458.8M445.8 312.9L337.1 458.2M526.6 326.7L882.9 459.2M458.8 312.9L352.5 458.3M503.2 326.0L859.1 459.7M472.0 312.7L368.0 458.3M453.2 323.3L806.9 458.9M483.9 333.6L398.9 458.4M429.1 322.2L783.0 459.4M501.1 328.0L414.3 458.4M405.8 321.5L759.1 459.8M514.4 328.0L429.8 458.5M379.4 319.5L731.0 458.6M527.7 328.0L445.3 458.5M355.3 318.4L707.0 459.1M541.0 328.0L460.7 458.6M332.1 317.7L683.1 459.5M554.3 328.1L476.2 458.6M308.0 316.5L659.1 460.0M567.7 328.1L491.6 458.6M283.0 315.0L631.1 458.8M584.5 321.9L507.1 458.7M259.0 313.8L607.1 459.2M597.7 322.0L522.6 458.7M196.2 305.0L555.2 458.5M624.1 322.0L553.5 458.8M173.0 304.1L531.2 458.9M637.3 322.1L569.0 458.8M148.4 302.5L507.2 459.4M650.6 322.1L584.4 458.9M140.1 308.0L483.2 459.8M663.8 322.1L599.9 458.9M99.8 299.4L455.4 458.6M677.0 322.1L615.4 459.0M75.2 297.7L431.3 459.1M682.8 339.3L630.9 459.0M52.5 296.8L407.3 459.5M696.3 339.3L646.3 459.0M51.6 306.0L383.2 460.0M709.8 339.3L661.8 459.1M28.5 305.0L355.5 458.8M723.3 339.4L677.3 459.1M-17.9 302.8L307.3 459.7M750.3 339.4L708.3 459.2M-19.0 312.5L279.8 458.5M763.8 339.5L723.8 459.2M-17.6 323.6L255.7 458.9M777.4 339.5L739.2 459.3M-18.7 333.8L231.5 459.4M790.9 339.5L754.7 459.3M-19.8 344.3L207.3 459.8M806.2 333.3L770.2 459.4M-18.4 356.4L179.9 458.6M819.6 333.3L785.7 459.4M-19.5 367.4L155.8 459.1M833.0 333.3L801.2 459.5M-18.0 380.2L131.6 459.5M846.4 333.4L816.7 459.5M-19.2 391.9L107.4 460.0M859.8 333.4L832.2 459.5M-18.9 417.8L55.8 459.2M886.7 333.5L863.2 459.6M-17.3 432.2L31.6 459.7M900.1 333.5L878.7 459.7M-18.6 445.3L4.4 458.5M913.5 333.5L894.2 459.7M927.0 333.6L909.7 459.7M940.4 333.6L925.2 459.8M953.8 333.6L940.7 459.8M967.2 333.7L956.3 459.9M980.7 333.7L971.8 459.9M994.1 333.7L987.3 459.9M1021.0 331.8L1018.4 457.3M1034.4 331.8L1033.9 457.4M1047.5 306.8L1049.3 457.4M1060.5 306.8L1064.8 457.5M1073.5 306.8L1080.3 457.5M1086.5 306.8L1095.8 457.5M1099.8 311.7L1109.8 439.1" stroke="#4a4a4a" stroke-opacity="1.000" stroke-width="1" fill="none"/>

<path d="M1043.6 -19.9L1108.1 -8.9M920.2 -20.0L1109.0 13.8M799.0 -19.6L1109.9 38.8M675.7 -19.7L1108.2 66.0M35.6 -20.0L-19.3 5.2M552.4 -19.8L1109.2 96.7M111.2 -19.9L-19.5 44.8M429.3 -19.8L1107.2 130.4M186.7 -19.9L-19.8 91.6M306.2 -19.9L1108.3 169.2M262.4 -19.8L-18.1 146.4M61.7 -19.6L1107.2 262.4M413.7 -19.6L-18.5 298.6M-19.0 -7.4L1108.5 320.5M489.4 -19.6L-18.8 406.4M-19.7 32.1L1105.6 387.0M565.2 -19.5L74.8 457.5M-18.8 79.4L1082.7 458.9M641.0 -19.4L229.0 457.9M-19.5 135.7L830.8 458.5M717.3 -20.0L383.4 458.3M-18.3 205.6L583.1 459.7M793.1 -19.9L538.0 458.8M-19.2 292.2L331.4 459.2M869.0 -19.8L692.8 459.2M-17.7 405.4L80.1 458.8M944.8 -19.8L847.7 459.6M1020.8 -19.7L1002.8 460.0M1096.7 -19.6L1110.0 84.3" stroke="#545454" stroke-width="1.3" fill="none"/>
<path d="M64.2 -49.9L1148.9 223.0" stroke="#9a344a" stroke-width="1.7" fill="none"/>
<path d="M383.5 -49.6L-49.4 234.7" stroke="#6b9a2c" stroke-width="1.6" fill="none"/>
<!-- Building A -->
<polygon points="0,0 65,0 73,82 80,90 80,133 76.6,132.7 54.7,147.3 45.6,152.8 25.5,158.3 0,174.7" fill="#413c39"/>
<polygon points="11,0 33,0 45.6,152.8 25.5,158.3 17,156" fill="#3a3a3a"/>
<polyline points="65,0 73,82 74,95" stroke="#ea5714" stroke-width="2.1" fill="none"/>
<polyline points="76.6,132.7 54.7,147.3 45.6,152.8 25.5,158.3 0,174.7" stroke="#ea5714" stroke-width="2.1" fill="none"/>
<!-- Building C -->
<polygon points="161,0 293,0 293,40 212,12.5 161,38.5" fill="#747474"/>
<path d="M166.3 3.4L180.8 6.3L180.8 23.6L166.3 20.7ZM187.4 7.6L201.9 10.5L201.9 27.7L187.4 24.9ZM208.5 11.8L223.0 14.6L223.0 31.9L208.5 29.0ZM229.6 15.9L244.2 18.8L244.2 36.1L229.6 33.2ZM250.8 20.1L265.3 22.9L265.3 40.2L250.8 37.4ZM271.9 24.2L286.4 27.1L286.4 44.4L271.9 41.5ZM166.3 26.5L180.8 29.3L180.8 46.6L166.3 43.8ZM187.4 30.6L201.9 33.5L201.9 50.8L187.4 47.9ZM208.5 34.8L223.0 37.7L223.0 54.9L208.5 52.1ZM229.6 39.0L244.2 41.8L244.2 59.1L229.6 56.2ZM250.8 43.1L265.3 46.0L265.3 63.3L250.8 60.4ZM271.9 47.3L286.4 50.1L286.4 67.4L271.9 64.6Z" stroke="#585858" stroke-width="0.8" fill="none"/>
<polygon points="293,0 370,0 370,40 296,97 293,97" fill="#413c39"/>
<polyline points="161,0 161,38.5" stroke="#ea5714" stroke-width="2.1" fill="none"/>
<polyline points="370.3,0 370.3,39.4 367,42.7 296.4,96.8" stroke="#ea5714" stroke-width="2.1" fill="none"/>
<!-- Building B -->
<polygon points="73,84 93,84 134,60 212,12.5 296.5,35.5 296,38 171.6,121.4 171.6,112 165,114.6 73,88" fill="#5b5d61"/>
<polygon points="73,88 165,114.6 171,122 178,320 164,315 161.5,309.7 148.5,306.3 116.4,294.1 93,282 87.7,254.5" fill="#6b6b6b"/>
<clipPath id="cB"><polygon points="73,88 165,114.6 171,122 178,320 164,315 161.5,309.7 148.5,306.3 116.4,294.1 93,282 87.7,254.5"/></clipPath>
<path clip-path="url(#cB)" d="M73.5 93.8L165.4 120.7M77.2 136.8L168.2 165.4M81.0 179.6L171.1 210.2M84.7 222.6L174.0 254.9M87.6 255.7L176.2 289.5M86.3 107.1L88.4 132.6M111.9 114.8L113.9 140.6M142.2 123.8L144.0 149.9M100.7 130.7L101.3 138.6M128.1 139.1L128.7 147.1M156.4 147.8L156.9 155.9M89.9 150.3L92.0 175.8M115.3 158.4L117.3 184.2M145.3 168.0L147.1 194.2M104.2 174.1L104.8 182.0M131.3 183.1L131.9 191.1M159.4 192.4L159.9 200.5M93.5 193.4L95.7 218.9M118.7 202.1L120.7 227.9M148.4 212.3L150.2 238.5M107.7 217.5L108.3 225.4M134.6 227.0L135.2 235.0M162.3 236.9L162.9 245.0M105.5 264.4L107.6 290.0M121.4 270.5L123.4 296.3M136.5 276.3L138.4 302.2M151.5 282.1L153.4 308.2" stroke="#585858" stroke-width="0.75" fill="none"/>
<polygon points="165,114.6 171.6,112 171.6,121.4 296,38 296,210 288.6,216.4 180,320.5 178,320" fill="#413c39"/>
<path d="M89 246L176 284M89 248.5L176 286.5" stroke="#5e6268" stroke-width="0.8" fill="none"/><path d="M96 262V283M107 267V288M121 272V294M124 273V298M134 277V301M148 283V307" stroke="#3f3f3f" stroke-width="0.9" fill="none"/>
<path d="M89 256.5L112.5 267.5M116.5 269.5L144.5 281.5" stroke="#3c3c3c" stroke-width="4.4" stroke-linecap="round" fill="none"/><path d="M89 256L112.5 267M116.5 269L144.5 281" stroke="#bdbdbd" stroke-width="3" stroke-linecap="round" fill="none"/>
<polygon points="73,84 93,84 134,60 212,12.5 296.5,35.5 296,210 288.6,216.4 180,320.5 178,321 164,315 161.5,309.7 148.5,306.3 116.4,294.1 93,282 87.7,256 87.7,254.5 73,88" stroke="#ea5714" stroke-width="2.1" fill="none" stroke-linejoin="round"/>
<!-- Building E -->
<polygon points="509.4,217 538.9,179.3 663.4,217" fill="#5b5d61"/>
<polyline points="509.4,217 538.9,179.3 663.4,216.2" stroke="#ea5714" stroke-width="2.1" fill="none"/>
<!-- Building D -->
<polygon points="468.5,0 497,5.7 499,0" fill="#858585"/>
<polyline points="466,-1 497,5.7" stroke="#ea5714" stroke-width="2.1" fill="none"/>
<polygon points="498,0 519,0 697,28 672.5,210.6 668,211.7 593.2,190.2 566,180.7 535.5,171 523,166.4 486.8,157.4" fill="#7c7c7c"/>
<clipPath id="cD"><polygon points="498,0 519,0 697,28 672.5,210.6 668,211.7 593.2,190.2 566,180.7 535.5,171 523,166.4 486.8,157.4"/></clipPath>
<g clip-path="url(#cD)"><path d="M505.9 9.2L522.6 11.9M508.3 9.6L506.2 34.0L513.8 35.4M522.5 13.6L521.9 20.5M529.1 13.0L545.9 15.7M531.5 13.3L529.2 38.1L536.7 39.5M545.7 17.3L545.0 24.4M552.4 16.7L569.1 19.4M554.7 17.1L552.1 42.3L559.7 43.7M568.9 21.1L568.1 28.3M575.6 20.5L592.3 23.2M578.0 20.8L575.1 46.5L582.7 47.9M592.1 24.9L591.3 32.2M598.8 24.2L615.6 26.9M601.2 24.6L598.1 50.6L605.7 52.0M615.3 28.7L614.4 36.1M622.1 28.0L638.8 30.7M624.4 28.3L621.0 54.8L628.6 56.2M638.6 32.4L637.6 40.0M645.3 31.7L662.0 34.4M647.7 32.1L644.0 59.0L651.6 60.4M661.8 36.2L660.7 43.9M668.5 35.5L685.3 38.2M670.9 35.8L667.0 63.1L674.6 64.5M685.0 40.0L683.8 47.8M503.2 41.7L519.6 44.8M505.5 42.1L503.4 66.5L510.9 68.0M519.5 46.4L518.9 53.4M526.0 46.0L542.5 49.1M528.4 46.4L526.0 71.2L533.5 72.8M542.4 50.7L541.6 57.8M548.9 50.3L565.4 53.4M551.3 50.7L548.6 75.9L556.1 77.5M565.2 55.1L564.4 62.3M571.8 54.6L588.3 57.7M574.1 55.0L571.3 80.6L578.7 82.2M588.1 59.4L587.2 66.7M594.7 58.9L611.2 62.0M597.0 59.3L593.9 85.4L601.4 86.9M611.0 63.7L610.0 71.2M617.6 63.2L634.1 66.3M619.9 63.6L616.5 90.1L624.0 91.7M633.8 68.1L632.8 75.6M640.5 67.5L656.9 70.6M642.8 67.9L639.1 94.8L646.6 96.4M656.7 72.4L655.6 80.1M663.3 71.8L679.8 74.9M665.7 72.2L661.8 99.5L669.2 101.1M679.6 76.7L678.4 84.6M500.4 74.1L516.6 77.6M502.7 74.6L500.6 99.0L508.0 100.7M516.5 79.3L515.9 86.2M522.9 79.0L539.2 82.5M525.2 79.5L522.9 104.3L530.3 106.0M539.0 84.1L538.3 91.2M545.5 83.8L561.7 87.3M547.8 84.3L545.2 109.5L552.5 111.3M561.5 89.0L560.7 96.3M568.0 88.7L584.2 92.2M570.3 89.2L567.4 114.8L574.8 116.6M584.0 93.9L583.2 101.3M590.6 93.6L606.8 97.1M592.8 94.1L589.7 120.1L597.1 121.8M606.6 98.8L605.6 106.3M613.1 98.4L629.3 101.9M615.4 98.9L612.0 125.4L619.3 127.1M629.1 103.7L628.1 111.3M635.6 103.3L651.9 106.8M637.9 103.8L634.3 130.7L641.6 132.4M651.6 108.6L650.5 116.3M658.2 108.1L674.4 111.6M660.4 108.6L656.5 135.9L663.9 137.7M674.1 113.5L673.0 121.3M497.7 106.6L513.7 110.5M499.9 107.1L497.8 131.5L505.1 133.4M513.5 112.1L512.9 119.1M519.9 112.0L535.8 115.9M522.1 112.5L519.8 137.3L527.0 139.2M535.7 117.5L535.0 124.6M542.0 117.4L558.0 121.3M544.3 117.9L541.7 143.2L548.9 145.1M557.8 123.0L557.1 130.2M564.2 122.8L580.2 126.7M566.5 123.4L563.6 149.0L570.9 150.9M580.0 128.4L579.1 135.8M586.4 128.2L602.4 132.1M588.7 128.8L585.5 154.8L592.8 156.8M602.2 133.9L601.2 141.3M608.6 133.7L624.6 137.6M610.9 134.2L607.5 160.7L614.7 162.6M624.3 139.3L623.3 146.9M630.8 139.1L646.8 143.0M633.0 139.6L629.4 166.5L636.6 168.4M646.5 144.8L645.4 152.5M653.0 144.5L668.9 148.4M655.2 145.0L651.3 172.3L658.6 174.3M668.7 150.2L667.5 158.0M499.3 4.9L692.5 35.5M496.6 37.2L687.0 72.5M494.0 69.4L681.4 109.4M491.4 101.7L675.9 146.3M488.6 134.8L670.2 184.1M494.2 136.3L492.4 157.4M520.1 143.4L518.1 164.9M544.2 149.9L541.9 171.8M570.2 156.9L567.6 179.3M596.1 164.0L593.3 186.7M622.0 171.0L618.9 194.2M648.0 178.1L644.6 201.7" stroke="#5e5e5e" stroke-width="0.9" fill="none"/><path d="M609 49L614 51L613 65L608 63ZM604.5 85L609.5 87L608.5 101L603.5 99ZM600.5 119.5L605.5 121.5L604.5 135.5L599.5 133.5ZM596.5 146L601.5 148L600.5 162L595.5 160ZM562.5 36L565.5 37L565.5 44L562.5 43ZM558.5 72L561.5 73L561.5 80L558.5 79ZM553.0 108L556.0 109L556.0 116L553.0 115ZM548.5 136L551.5 137L551.5 144L548.5 143Z" fill="#353535"/><path d="M519 -2.5L519 4.5M543 0.5L543 7.5M568 4.5L568 11.5M615.5 13.5L615.5 20.5M642.6 20.5L642.6 27.5M668.7 26.5L668.7 33.5" stroke="#c8c8c8" stroke-width="3.6" stroke-linecap="round" fill="none"/><path d="M492.5 135.9L519.6 143.8M540 149L568.3 158M575 161.9L666.8 188" stroke="#c4c4c4" stroke-width="2.2" fill="none"/></g>
<polygon points="519,0 728,0 697,28" fill="#5b5d61"/>
<polygon points="697,28 728,0 734.5,0 725,58 712.1,126.8 668,211.7 672.5,210.6" fill="#3e3a38"/>
<polyline points="498,0 486.8,157.4 523,166.4 535.5,171 566,180.7 593.2,190.2 668,211.7 712.1,126.8 725,58 734.5,0" stroke="#ea5714" stroke-width="2.1" fill="none" stroke-linejoin="round"/>
<!-- Building F -->
<polygon points="734.5,0 920,0 895,96.3 725,58" fill="#808080"/>
<clipPath id="cF"><polygon points="734.5,0 920,0 895,96.3 725,58"/></clipPath>
<path clip-path="url(#cF)" d="M743.2 -13.1L760.2 -12.0L757.5 6.0L740.9 4.3ZM768.7 -11.5L785.7 -10.4L782.3 8.5L765.8 6.8ZM794.2 -9.8L811.2 -8.7L807.2 11.0L790.6 9.3ZM819.7 -8.2L836.7 -7.1L832.1 13.5L815.5 11.8ZM845.2 -6.5L862.2 -5.4L857.0 16.0L840.4 14.3ZM870.7 -4.9L887.7 -3.8L881.9 18.5L865.3 16.8ZM896.2 -3.2L913.2 -2.1L906.8 21.0L890.2 19.3ZM739.3 16.2L755.6 18.3L752.9 36.3L737.0 33.7ZM763.8 19.3L780.1 21.4L776.7 40.2L760.8 37.6ZM788.2 22.4L804.5 24.4L800.6 44.1L784.7 41.5ZM812.7 25.4L829.0 27.5L824.5 48.0L808.6 45.4ZM837.2 28.5L853.5 30.6L848.3 52.0L832.4 49.3ZM861.6 31.6L878.0 33.6L872.2 55.9L856.3 53.3ZM886.1 34.7L902.4 36.7L896.1 59.8L880.2 57.2ZM802.2 45.3L793.5 70.6M837.5 51.2L827.7 78.1M862.2 55.3L851.5 83.4M892.2 60.2L880.5 89.7" stroke="#737373" stroke-width="0.6" fill="none"/>
<polyline points="725,58 895,96.3 920,0" stroke="#ea5714" stroke-width="2.1" fill="none" stroke-linejoin="round"/>
<!-- Building G -->
<polygon points="1086,37 1083,39.5 1080,45 1079.5,55 1077,62 1075.3,68 1075,94 1078,101 1080.5,110 1080,117 1082,130 1086,131" fill="#8f8f8f"/>
<polygon points="1078,64 1084,60 1086,62 1086,72 1080,76" fill="#3a3a3a"/>
<rect x="1076" y="84" width="10" height="5" fill="#6a6a6a"/><rect x="1076" y="95" width="10" height="3" fill="#b5b5b5"/>
<polyline points="1086,37 1083,39.5 1080,45 1079.5,55 1077,62 1075.3,68 1075,94 1078,101 1080.5,110 1080,117 1082,130 1086,131" stroke="#ea5714" stroke-width="2.1" fill="none"/>
<!-- dots -->
<circle cx="238" cy="41" r="2.6" fill="#ea5714" stroke="#222" stroke-width="0.6"/>
<circle cx="199.6" cy="245" r="2.6" fill="#ea5714" stroke="#222" stroke-width="0.6"/>
<circle cx="559" cy="130.5" r="2.6" fill="#ea5714" stroke="#222" stroke-width="0.6"/>
<circle cx="711" cy="17.5" r="2.6" fill="#ea5714" stroke="#222" stroke-width="0.6"/>
<!-- 3D cursor -->
<g transform="translate(294.5,8)">
<path d="M0 -20V-5M0 4V19M-19 -4.5L-3.5 -0.8M3.5 0.8L19 4.5M-8 5.3L-3 2M3 -2L8 -5.3" stroke="#0a0a0a" stroke-width="1.1" fill="none"/>
<circle r="10.2" fill="none" stroke="#f4f4f4" stroke-width="1.7"/>
<circle r="10.2" fill="none" stroke="#e4201c" stroke-width="1.7" stroke-dasharray="4 4"/>
<circle r="2.5" fill="#f5a020" stroke="#1a1a1a" stroke-width="0.8"/>
</g>
</g>
</svg>
<div style="position:absolute;left:0;top:444px;width:239px;height:104px;background:#181818">
<div style="position:absolute;left:0;top:0;width:239px;height:1px;background:#4a4a4a"></div>
<div style="position:absolute;left:0;top:3.5px;width:239px;height:26.5px;background:#2a2a2a;border-top:2px solid #2f2f2f"></div><div style="position:absolute;left:0;top:27.5px;width:239px;height:1.5px;background:#303030"></div>
<div style="position:absolute;left:202px;top:7.7px;width:18.5px;height:18.3px;background:#535353;border-radius:3.5px 0 0 3.5px"></div>
<div style="position:absolute;left:205.9px;top:12px;width:10px;height:10px;border:1.2px solid #d6d6d6;border-radius:50%"></div>
<div style="position:absolute;left:220.5px;top:7.7px;width:19px;height:18.3px;background:#2e2e2e"></div>
<svg style="position:absolute;left:226.2px;top:15px" width="8" height="5" viewBox="0 0 8 5"><path d="M0.7 0.8L4 4L7.3 0.8" stroke="#7a7a7a" stroke-width="1" fill="none"/></svg>
<div style="position:absolute;left:0;top:30px;width:239px;height:23px;background:#1d1d1d"></div>
<div style="position:absolute;left:0;top:53px;width:239px;height:35.5px;background:#2c2c2c"></div>
<div style="position:absolute;left:0;top:83.5px;width:239px;height:5px;background:#343434"></div>
<div style="position:absolute;left:26px;top:53px;width:1px;height:35.5px;background:#171717"></div>
<div style="position:absolute;left:85px;top:53px;width:1px;height:35.5px;background:#171717"></div>
<div style="position:absolute;left:144px;top:53px;width:1px;height:35.5px;background:#171717"></div>
<div style="position:absolute;left:203px;top:53px;width:1px;height:35.5px;background:#171717"></div>
<div style="position:absolute;left:55px;top:53px;width:1px;height:35.5px;background:#262626"></div>
<div style="position:absolute;left:114px;top:53px;width:1px;height:35.5px;background:#262626"></div>
<div style="position:absolute;left:173px;top:53px;width:1px;height:35.5px;background:#262626"></div>
<div style="position:absolute;left:232px;top:53px;width:1px;height:35.5px;background:#262626"></div>
<div class="fn" style="left:26px">80</div><div class="fn" style="left:85.5px">90</div><div class="fn" style="left:144.5px">100</div><div class="fn" style="left:203.5px">110</div>
</div>
<div style="position:absolute;left:1086px;top:0;width:18px;height:217px;background:#1d1d1d;border-left:2.5px solid #141414;overflow:hidden">
<svg style="position:absolute;left:0;top:0" width="16" height="217" viewBox="1088 0 16 217">
<path d="M1100.5 18V29H1108M1102.5 16V27H1108M1104.5 14V25" stroke="#d0d0d0" stroke-width="1.1" fill="none"/>
<path d="M1099 53Q1100 47 1104 43L1108 43V55H1100Q1099 55 1099 53Z" fill="#d4d4d4"/>
<circle cx="1104.5" cy="78" r="6" fill="none" stroke="#c5657a" stroke-width="1.6"/><path d="M1100 83L1103 80" stroke="#c5657a" stroke-width="1.5"/>
<rect x="1088" y="92.5" width="16" height="1" fill="#262626"/>
<path d="M1108 107H1099.7V120H1108M1099.7 110H1108" stroke="#e8e8e8" stroke-width="1.4" fill="none"/>
<rect x="1093" y="136.5" width="20" height="25.5" rx="4" fill="#2e2e2e"/>
<path d="M1102 143H1099.8V157H1102" stroke="#e8944a" stroke-width="1.3" fill="none"/><rect x="1101.8" y="145.5" width="4" height="9" fill="#f0a050"/>
<path d="M1099 183L1104 177L1108 174" stroke="#5b8fe0" stroke-width="3" stroke-linecap="round" fill="none"/>
<circle cx="1102" cy="201" r="2.8" fill="#5b8fe0"/><path d="M1102 203V211" stroke="#5b8fe0" stroke-width="1.2"/><circle cx="1102" cy="211.5" r="1.3" fill="#5b8fe0"/>
</svg></div>
<div id="win" style="position:absolute;left:239px;top:217px;width:865px;height:331px;background:#fff;border-top-left-radius:8px;overflow:hidden">
  <!-- tab bar -->
  <div style="position:absolute;left:0;top:0;width:865px;height:39px;background:#e8e8e8"></div>
  <div style="position:absolute;left:0;top:30px;width:865px;height:9px;background:#f9f9f9"></div>
  <div style="position:absolute;left:0;top:0;width:8px;height:39px;background:#e8e8e8;border-bottom-right-radius:6px"></div>
  <div style="position:absolute;left:248px;top:0;width:617px;height:39px;background:#e8e8e8;border-bottom-left-radius:7px;box-shadow:inset 0 -1px 0 #dedede"></div>
  <div style="position:absolute;left:8px;top:8px;width:240px;height:31px;background:#f9f9f9;border-radius:7px 7px 0 0"></div>
  <svg style="position:absolute;left:17px;top:16px" width="17" height="14" viewBox="0 0 17 14">
    <defs><linearGradient id="fg" x1="0" y1="0" x2="0" y2="1"><stop offset="0" stop-color="#ffe38a"/><stop offset="1" stop-color="#f7c23a"/></linearGradient></defs>
    <path d="M0.5 2 Q0.5 0.5 2 0.5 H6 L7.5 2 H15 Q16.5 2 16.5 3.5 V12 Q16.5 13.5 15 13.5 H2 Q0.5 13.5 0.5 12 Z" fill="#e9a91a"/>
    <path d="M0.5 4 H16.5 V12 Q16.5 13.5 15 13.5 H2 Q0.5 13.5 0.5 12 Z" fill="url(#fg)"/>
  </svg>
  <div class="t" style="left:43px;top:16px;font-size:12.7px">textures</div>
  <svg style="position:absolute;left:221px;top:18px" width="11" height="11" viewBox="0 0 11 11"><path d="M1 1L10 10M10 1L1 10" stroke="#222" stroke-width="1.1"/></svg>
  <svg style="position:absolute;left:265px;top:18px" width="11" height="11" viewBox="0 0 11 11"><path d="M5.5 0.5V10.5M0.5 5.5H10.5" stroke="#222" stroke-width="1.1"/></svg>
  <!-- nav row -->
  <div style="position:absolute;left:0;top:39px;width:865px;height:49px;background:#f9f9f9;border-bottom:1px solid #d9d9d9"></div>
  <svg style="position:absolute;left:19px;top:55px" width="16" height="16" viewBox="0 0 16 16"><path d="M14.5 8H2M7.5 2.5L2 8L7.5 13.5" stroke="#1f1f1f" stroke-width="1.1" fill="none"/></svg>
  <svg style="position:absolute;left:67px;top:55px" width="16" height="16" viewBox="0 0 16 16"><path d="M1.5 8H14M8.5 2.5L14 8L8.5 13.5" stroke="#a3a3a3" stroke-width="1.1" fill="none"/></svg>
  <svg style="position:absolute;left:114px;top:55px" width="16" height="16" viewBox="0 0 16 16"><path d="M8 14.5V2M2.5 7.5L8 2L13.5 7.5" stroke="#1f1f1f" stroke-width="1.1" fill="none"/></svg>
  <svg style="position:absolute;left:163px;top:55px" width="16" height="16" viewBox="0 0 16 16"><path d="M13.3 6.2A5.6 5.6 0 1 0 13.6 9.2" stroke="#1f1f1f" stroke-width="1.1" fill="none"/><path d="M13.6 2.3V6.5H9.4" stroke="#1f1f1f" stroke-width="1.1" fill="none"/></svg>
  <div style="position:absolute;left:201px;top:47px;width:680px;height:31px;background:#fefefe;border-radius:6px"></div>
  <svg style="position:absolute;left:214px;top:55px" width="17" height="16" viewBox="0 0 17 16"><rect x="1" y="1" width="15" height="11" rx="2" stroke="#333" stroke-width="1.1" fill="none"/><path d="M5 14.5H12M8.5 12V14.5" stroke="#333" stroke-width="1.1"/></svg>
  <svg style="position:absolute;left:248px;top:58px" width="8" height="10" viewBox="0 0 8 10"><path d="M2 1L6 5L2 9" stroke="#333" stroke-width="1.1" fill="none"/></svg>
  <div class="t tn" style="left:273.5px;top:55px;font-size:14px">Brownstone Building Set</div>
  <svg style="position:absolute;left:441px;top:58px" width="8" height="10" viewBox="0 0 8 10"><path d="M2 1L6 5L2 9" stroke="#333" stroke-width="1.1" fill="none"/></svg>
  <div class="t tn" style="left:465.3px;top:55px;font-size:14px">fbx</div>
  <svg style="position:absolute;left:502px;top:58px" width="8" height="10" viewBox="0 0 8 10"><path d="M2 1L6 5L2 9" stroke="#333" stroke-width="1.1" fill="none"/></svg>
  <div class="t tn" style="left:526.5px;top:55px;font-size:14px">textures</div>
  <!-- toolbar -->
  <div style="position:absolute;left:0;top:88px;width:865px;height:47px;background:#fff;border-bottom:1px solid #d9d9d9"></div>
  <svg style="position:absolute;left:17px;top:104px" width="17" height="17" viewBox="0 0 17 17"><circle cx="8.5" cy="8.5" r="7.6" stroke="#333" stroke-width="1.05" fill="none"/><path d="M8.5 4.5V12.5M4.5 8.5H12.5" stroke="#0a64c8" stroke-width="1.3"/></svg>
  <div class="t tn" style="left:42px;top:105px;font-size:11.7px;letter-spacing:0.3px">Создать</div>
  <svg style="position:absolute;left:91px;top:109px" width="8" height="6" viewBox="0 0 8 6"><path d="M1 1.5L4 4.5L7 1.5" stroke="#888" stroke-width="1" fill="none"/></svg>
  <div style="position:absolute;left:116px;top:96px;width:1px;height:31px;background:#e6e6e6"></div>
  <!-- disabled icons -->
  <svg style="position:absolute;left:134px;top:104px" width="18" height="18" viewBox="0 0 18 18"><path d="M5 1L11.5 12M13 1L6.5 12" stroke="#9cc3e8" stroke-width="1.1" fill="none"/><circle cx="5" cy="14" r="2.6" stroke="#9cc3e8" stroke-width="1.1" fill="none"/><circle cx="13" cy="14" r="2.6" stroke="#9cc3e8" stroke-width="1.1" fill="none"/></svg>
  <svg style="position:absolute;left:182px;top:104px" width="18" height="18" viewBox="0 0 18 18"><rect x="6" y="1.5" width="10" height="10" rx="2" stroke="#9cc3e8" stroke-width="1.1" fill="none"/><path d="M4 5.5Q2 5.5 2 7.5V14Q2 16 4 16H10.5Q12.5 16 12.5 14" stroke="#b5b5b5" stroke-width="1.1" fill="none"/></svg>
  <svg style="position:absolute;left:230px;top:103px" width="18" height="19" viewBox="0 0 18 19"><path d="M5 3.5H3.5Q2 3.5 2 5V16Q2 17.5 3.5 17.5H6M13 3.5H14Q15.5 3.5 15.5 5V7" stroke="#b5b5b5" stroke-width="1.1" fill="none"/><rect x="6" y="1.5" width="6" height="3" rx="1" stroke="#b5b5b5" stroke-width="1.1" fill="none"/><rect x="8" y="8" width="8" height="10" rx="1.5" stroke="#9cc3e8" stroke-width="1.1" fill="none"/></svg>
  <svg style="position:absolute;left:277px;top:103px" width="20" height="19" viewBox="0 0 20 19"><path d="M7 4H3Q1.5 4 1.5 5.5V12.5Q1.5 14 3 14H7M13 4H17Q18.5 4 18.5 5.5V12.5Q18.5 14 17 14H13" stroke="#b5b5b5" stroke-width="1.1" fill="none"/><path d="M10 1.5V17.5M8 1.5H12M8 17.5H12" stroke="#9cc3e8" stroke-width="1.1"/><path d="M3.5 12L5.5 6H6L8 12M4.3 10H7.2" stroke="#9cc3e8" stroke-width="1" fill="none"/></svg>
  <svg style="position:absolute;left:326px;top:103px" width="19" height="18" viewBox="0 0 19 18"><path d="M6 4H3.5Q2 4 2 5.5V14.5Q2 16 3.5 16H13Q14.5 16 14.5 14.5V12" stroke="#b5b5b5" stroke-width="1.1" fill="none"/><path d="M6 12Q7 6 13 6V3L17.5 7.5L13 12V9Q8.5 9 6 12Z" stroke="#9cc3e8" stroke-width="1.1" fill="none"/></svg>
  <svg style="position:absolute;left:374px;top:103px" width="17" height="19" viewBox="0 0 17 19"><path d="M1.5 4H15.5M6 4V2H11V4M3 4L4 16.5Q4.2 18 5.7 18H11.3Q12.8 18 13 16.5L14 4M7 7.5V14.5M10 7.5V14.5" stroke="#b5b5b5" stroke-width="1.1" fill="none"/></svg>
  <div style="position:absolute;left:409px;top:96px;width:1px;height:31px;background:#e6e6e6"></div>
  <svg style="position:absolute;left:425px;top:104px" width="17" height="17" viewBox="0 0 17 17"><path d="M4.5 15.5V2M1 5.5L4.5 2L8 5.5" stroke="#333" stroke-width="1.1" fill="none"/><path d="M12 1.5V15M8.5 11.5L12 15L15.5 11.5" stroke="#0a64c8" stroke-width="1.2" fill="none"/></svg>
  <div class="t tn" style="left:450px;top:105px;font-size:11.7px;letter-spacing:0.28px">Сортировать</div>
  <svg style="position:absolute;left:528px;top:109px" width="8" height="6" viewBox="0 0 8 6"><path d="M1 1.5L4 4.5L7 1.5" stroke="#888" stroke-width="1" fill="none"/></svg>
  <svg style="position:absolute;left:565px;top:105px" width="15" height="15" viewBox="0 0 15 15"><rect x="1.5" y="1.5" width="11.5" height="9.5" rx="2" stroke="#333" stroke-width="1.1" fill="none"/><path d="M1.5 13.5H13" stroke="#333" stroke-width="1.1"/></svg>
  <div class="t tn" style="left:587.5px;top:105px;font-size:11.7px;letter-spacing:0.55px">Просмотреть</div>
  <svg style="position:absolute;left:668px;top:109px" width="8" height="6" viewBox="0 0 8 6"><path d="M1 1.5L4 4.5L7 1.5" stroke="#888" stroke-width="1" fill="none"/></svg>
  <div style="position:absolute;left:692px;top:96px;width:1px;height:31px;background:#e6e6e6"></div>
  <svg style="position:absolute;left:708px;top:111px" width="18" height="5" viewBox="0 0 18 5"><circle cx="2.3" cy="2.5" r="1.6" fill="#222"/><circle cx="9" cy="2.5" r="1.6" fill="#222"/><circle cx="15.7" cy="2.5" r="1.6" fill="#222"/></svg>
  <!-- sidebar -->
  <div style="position:absolute;left:158px;top:135px;width:1px;height:196px;background:#f3f3f3"></div>
  <div style="position:absolute;left:2px;top:141px;width:154px;height:32px;background:#d9d9d9;border:1px solid #8f8f8f"></div>
  <svg style="position:absolute;left:33px;top:149px" width="17" height="16" viewBox="0 0 17 16"><defs><linearGradient id="hg" x1="0" y1="0" x2="0" y2="1"><stop offset="0" stop-color="#e4e4e4"/><stop offset="1" stop-color="#9a9a9a"/></linearGradient></defs><path d="M3 7.5V14.5Q3 15.5 4 15.5H6.5V10.5H10.5V15.5H13Q14 15.5 14 14.5V7.5L8.5 3Z" fill="url(#hg)"/><path d="M1 8L8.5 1.5L16 8" stroke="#f07a12" stroke-width="2.2" fill="none" stroke-linejoin="round" stroke-linecap="round"/></svg>
  <div class="t" style="left:55px;top:149px;font-size:12px">Главная</div>
  <svg style="position:absolute;left:34px;top:180px" width="16" height="17" viewBox="0 0 16 17"><rect x="2" y="3" width="13" height="13" rx="1.5" fill="#1565c0"/><rect x="0.5" y="0.5" width="13" height="13" rx="1.5" fill="#2b8ae6"/><path d="M0.5 12L5.5 7L10.5 12V13.5H0.5Z" fill="#e8f2fc"/><circle cx="9.5" cy="4.5" r="1.6" fill="#fff"/></svg>
  <div class="t" style="left:55px;top:181px;font-size:12px">Галерея</div>
  <div style="position:absolute;left:10px;top:221px;width:138px;height:1px;background:#d6d6d6"></div>
  <svg style="position:absolute;left:34px;top:247px" width="16" height="12" viewBox="0 0 16 12"><defs><linearGradient id="dg" x1="0" y1="0" x2="0" y2="1"><stop offset="0" stop-color="#3fb6f0"/><stop offset="1" stop-color="#1473c9"/></linearGradient></defs><rect x="0" y="0" width="16" height="12" rx="1.5" fill="url(#dg)"/><rect x="2" y="2" width="2" height="1.6" fill="#fff"/><rect x="2" y="5" width="2" height="1.6" fill="#fff"/></svg>
  <div class="t" style="left:55px;top:245px;font-size:12px">Desktop</div>
  <svg style="position:absolute;left:35px;top:276px" width="14" height="17" viewBox="0 0 14 17"><path d="M7 1V12M2.5 7.5L7 12L11.5 7.5" stroke="#1a9f76" stroke-width="1.6" fill="none"/><path d="M0.5 15.5H13.5" stroke="#2bb38c" stroke-width="1.8"/></svg>
  <div class="t" style="left:55px;top:277px;font-size:12px">Загрузки</div>
  <svg style="position:absolute;left:36px;top:309.5px" width="13" height="16" viewBox="0 0 13 16"><rect x="0" y="0" width="12" height="15" rx="1.2" fill="#8aa0c2"/><path d="M2.5 3.5H6M2.5 5.5H6M7.5 3.5H10M7.5 5.5H10M2.5 8H10M2.5 10H10M2.5 12H10" stroke="#fff" stroke-width="0.9"/></svg>
  <div class="t" style="left:55px;top:309px;font-size:12px">Документы</div>
  <svg class="pin" style="position:absolute;left:142px;top:246px" width="12" height="12" viewBox="0 0 12 12"><path d="M7 0.5L11.5 5L10 5.6L8 7.6L8.3 10L7.5 10.8L1.2 4.5L2 3.7L4.4 4L6.4 2L7 0.5Z" fill="#8a8a8a"/><path d="M4 8L1 11" stroke="#8a8a8a" stroke-width="1.3"/></svg>
  <svg class="pin" style="position:absolute;left:142px;top:278px" width="12" height="12" viewBox="0 0 12 12"><path d="M7 0.5L11.5 5L10 5.6L8 7.6L8.3 10L7.5 10.8L1.2 4.5L2 3.7L4.4 4L6.4 2L7 0.5Z" fill="#8a8a8a"/><path d="M4 8L1 11" stroke="#8a8a8a" stroke-width="1.3"/></svg>
  <svg class="pin" style="position:absolute;left:142px;top:310px" width="12" height="12" viewBox="0 0 12 12"><path d="M7 0.5L11.5 5L10 5.6L8 7.6L8.3 10L7.5 10.8L1.2 4.5L2 3.7L4.4 4L6.4 2L7 0.5Z" fill="#8a8a8a"/><path d="M4 8L1 11" stroke="#8a8a8a" stroke-width="1.3"/></svg>
  <svg style="position:absolute;left:180px;top:145px;box-shadow:0 1px 2px rgba(0,0,0,0.3)" width="90" height="90" viewBox="0 0 90 90"><rect x="0.0" y="0.0" width="90.0" height="90.0" fill="#6b433a"/><rect x="45.0" y="0.0" width="45.0" height="44.5" fill="#5f3c35"/><rect x="0.0" y="44.5" width="45.0" height="45.5" fill="#5e3a34"/><rect x="45.0" y="44.5" width="22.5" height="45.5" fill="#5a3631"/><rect x="67.5" y="44.5" width="22.5" height="45.5" fill="#3b3232"/><rect x="0.0" y="67.0" width="22.2" height="23.0" fill="#8c8c8c"/><rect x="45.2" y="56.7" width="22.1" height="10.6" fill="#9a9d9d"/><rect x="67.5" y="44.5" width="22.5" height="4.5" fill="#2b3036"/><rect x="3.3" y="7.7" width="6.1" height="12.8" fill="#4b3a33"/><rect x="4.1" y="8.5" width="4.5" height="11.2" fill="#2f3030"/><rect x="3.3" y="31.2" width="6.1" height="11.8" fill="#4b3a33"/><rect x="4.1" y="32.0" width="4.5" height="10.2" fill="#2f3030"/><rect x="15.3" y="7.7" width="5.8" height="12.8" fill="#4b3a33"/><rect x="16.1" y="8.5" width="4.2" height="11.2" fill="#2f3030"/><rect x="15.3" y="31.2" width="5.8" height="11.8" fill="#4b3a33"/><rect x="16.1" y="32.0" width="4.2" height="10.2" fill="#2f3030"/><rect x="24.2" y="7.7" width="5.6" height="12.8" fill="#4b3a33"/><rect x="25.0" y="8.5" width="4.0" height="11.2" fill="#2f3030"/><rect x="24.2" y="31.2" width="5.6" height="11.8" fill="#4b3a33"/><rect x="25.0" y="32.0" width="4.0" height="10.2" fill="#2f3030"/><rect x="35.5" y="7.7" width="5.8" height="12.8" fill="#4b3a33"/><rect x="36.3" y="8.5" width="4.2" height="11.2" fill="#2f3030"/><rect x="35.5" y="31.2" width="5.8" height="11.8" fill="#4b3a33"/><rect x="36.3" y="32.0" width="4.2" height="10.2" fill="#2f3030"/><rect x="49.0" y="13.7" width="6.8" height="10.6" fill="#4b3a33"/><rect x="49.8" y="14.5" width="5.2" height="9.0" fill="#2f3030"/><rect x="49.0" y="29.7" width="6.8" height="10.6" fill="#4b3a33"/><rect x="49.8" y="30.5" width="5.2" height="9.0" fill="#2f3030"/><rect x="59.8" y="13.7" width="6.0" height="10.6" fill="#4b3a33"/><rect x="60.6" y="14.5" width="4.4" height="9.0" fill="#2f3030"/><rect x="59.8" y="29.7" width="6.0" height="10.6" fill="#4b3a33"/><rect x="60.6" y="30.5" width="4.4" height="9.0" fill="#2f3030"/><rect x="69.2" y="13.7" width="6.2" height="10.6" fill="#4b3a33"/><rect x="70.0" y="14.5" width="4.6" height="9.0" fill="#2f3030"/><rect x="69.2" y="29.7" width="6.2" height="10.6" fill="#4b3a33"/><rect x="70.0" y="30.5" width="4.6" height="9.0" fill="#2f3030"/><rect x="79.2" y="13.7" width="6.2" height="10.6" fill="#4b3a33"/><rect x="80.0" y="14.5" width="4.6" height="9.0" fill="#2f3030"/><rect x="79.2" y="29.7" width="6.2" height="10.6" fill="#4b3a33"/><rect x="80.0" y="30.5" width="4.6" height="9.0" fill="#2f3030"/><rect x="71.2" y="52.1" width="5.5" height="7.5" fill="#4b3a33"/><rect x="72.0" y="52.9" width="3.9" height="5.9" fill="#2f3030"/><rect x="71.2" y="62.7" width="5.5" height="7.9" fill="#4b3a33"/><rect x="72.0" y="63.5" width="3.9" height="6.3" fill="#2f3030"/><rect x="80.2" y="49.8" width="8.9" height="9.3" fill="#4b3a33"/><rect x="81.0" y="50.6" width="7.3" height="7.7" fill="#2f3030"/><rect x="80.2" y="61.6" width="8.9" height="9.3" fill="#4b3a33"/><rect x="81.0" y="62.4" width="7.3" height="7.7" fill="#2f3030"/><rect x="80.2" y="78.0" width="8.9" height="8.8" fill="#4b3a33"/><rect x="81.0" y="78.8" width="7.3" height="7.2" fill="#2f3030"/><rect x="16.6" y="9.5" width="3.2" height="5.6" fill="#9a9285"/><rect x="25.5" y="9.5" width="3.0" height="5.6" fill="#9a9285"/><rect x="16.6" y="33.0" width="3.2" height="5.1" fill="#9a9285"/><rect x="36.8" y="33.0" width="3.2" height="5.1" fill="#9a9285"/><rect x="61.1" y="15.5" width="3.4" height="4.5" fill="#9a9285"/><rect x="70.5" y="15.5" width="3.6" height="4.5" fill="#9a9285"/><rect x="80.5" y="31.5" width="3.6" height="4.5" fill="#9a9285"/><rect x="61.1" y="31.5" width="3.4" height="4.5" fill="#9a9285"/></svg>
<div class="lb" style="left:165px;top:238.5px">Brownstone_Faca</div>
<div class="lb" style="left:165px;top:253.6px">de_Flr_1_Dif.jpeg</div>
<svg style="position:absolute;left:288px;top:145px;box-shadow:0 1px 2px rgba(0,0,0,0.3)" width="90" height="90" viewBox="0 0 90 90"><rect x="0.0" y="0.0" width="90.0" height="90.0" fill="#dddddd"/><rect x="45.0" y="0.0" width="45.0" height="44.5" fill="#dadada"/><rect x="0.0" y="44.5" width="45.0" height="45.5" fill="#dadada"/><rect x="45.0" y="44.5" width="22.5" height="45.5" fill="#d8d8d8"/><rect x="67.5" y="44.5" width="22.5" height="45.5" fill="#d6d6d6"/><rect x="0.0" y="67.0" width="22.2" height="23.0" fill="#d4d4d4"/><rect x="45.2" y="56.7" width="22.1" height="10.6" fill="#dcdcdc"/><rect x="4.1" y="8.5" width="4.5" height="11.2" fill="#8e8e8e"/><rect x="4.1" y="13.6" width="4.5" height="1.0" fill="#c8c8c8"/><rect x="4.1" y="32.0" width="4.5" height="10.2" fill="#8e8e8e"/><rect x="4.1" y="36.6" width="4.5" height="1.0" fill="#c8c8c8"/><rect x="16.1" y="8.5" width="4.2" height="11.2" fill="#8e8e8e"/><rect x="16.1" y="13.6" width="4.2" height="1.0" fill="#c8c8c8"/><rect x="16.1" y="32.0" width="4.2" height="10.2" fill="#8e8e8e"/><rect x="16.1" y="36.6" width="4.2" height="1.0" fill="#c8c8c8"/><rect x="25.0" y="8.5" width="4.0" height="11.2" fill="#8e8e8e"/><rect x="25.0" y="13.6" width="4.0" height="1.0" fill="#c8c8c8"/><rect x="25.0" y="32.0" width="4.0" height="10.2" fill="#8e8e8e"/><rect x="25.0" y="36.6" width="4.0" height="1.0" fill="#c8c8c8"/><rect x="36.3" y="8.5" width="4.2" height="11.2" fill="#8e8e8e"/><rect x="36.3" y="13.6" width="4.2" height="1.0" fill="#c8c8c8"/><rect x="36.3" y="32.0" width="4.2" height="10.2" fill="#8e8e8e"/><rect x="36.3" y="36.6" width="4.2" height="1.0" fill="#c8c8c8"/><rect x="49.8" y="14.5" width="5.2" height="9.0" fill="#8e8e8e"/><rect x="49.8" y="18.5" width="5.2" height="1.0" fill="#c8c8c8"/><rect x="49.8" y="30.5" width="5.2" height="9.0" fill="#8e8e8e"/><rect x="49.8" y="34.5" width="5.2" height="1.0" fill="#c8c8c8"/><rect x="60.6" y="14.5" width="4.4" height="9.0" fill="#8e8e8e"/><rect x="60.6" y="18.5" width="4.4" height="1.0" fill="#c8c8c8"/><rect x="60.6" y="30.5" width="4.4" height="9.0" fill="#8e8e8e"/><rect x="60.6" y="34.5" width="4.4" height="1.0" fill="#c8c8c8"/><rect x="70.0" y="14.5" width="4.6" height="9.0" fill="#8e8e8e"/><rect x="70.0" y="18.5" width="4.6" height="1.0" fill="#c8c8c8"/><rect x="70.0" y="30.5" width="4.6" height="9.0" fill="#8e8e8e"/><rect x="70.0" y="34.5" width="4.6" height="1.0" fill="#c8c8c8"/><rect x="80.0" y="14.5" width="4.6" height="9.0" fill="#8e8e8e"/><rect x="80.0" y="18.5" width="4.6" height="1.0" fill="#c8c8c8"/><rect x="80.0" y="30.5" width="4.6" height="9.0" fill="#8e8e8e"/><rect x="80.0" y="34.5" width="4.6" height="1.0" fill="#c8c8c8"/><rect x="72.0" y="52.9" width="3.9" height="5.9" fill="#8e8e8e"/><rect x="72.0" y="55.3" width="3.9" height="1.0" fill="#c8c8c8"/><rect x="72.0" y="63.5" width="3.9" height="6.3" fill="#8e8e8e"/><rect x="72.0" y="66.2" width="3.9" height="1.0" fill="#c8c8c8"/><rect x="81.0" y="50.6" width="7.3" height="7.7" fill="#8e8e8e"/><rect x="81.0" y="54.0" width="7.3" height="1.0" fill="#c8c8c8"/><rect x="81.0" y="62.4" width="7.3" height="7.7" fill="#8e8e8e"/><rect x="81.0" y="65.8" width="7.3" height="1.0" fill="#c8c8c8"/><rect x="81.0" y="78.8" width="7.3" height="7.2" fill="#8e8e8e"/><rect x="81.0" y="81.9" width="7.3" height="1.0" fill="#c8c8c8"/></svg>
<div class="lb" style="left:273px;top:238.5px">Brownstone_Faca</div>
<div class="lb" style="left:273px;top:253.6px">de_Flr_1_Height.j</div>
<div class="lb" style="left:273px;top:268.7px">peg</div>
<svg style="position:absolute;left:396px;top:145px;box-shadow:0 1px 2px rgba(0,0,0,0.3)" width="90" height="90" viewBox="0 0 90 90"><rect x="0.0" y="0.0" width="90.0" height="90.0" fill="#fff"/><rect x="4.1" y="8.5" width="4.5" height="11.2" fill="#0c0c0c"/><rect x="4.1" y="13.6" width="4.5" height="1.0" fill="#e8e8e8"/><rect x="4.1" y="32.0" width="4.5" height="10.2" fill="#0c0c0c"/><rect x="4.1" y="36.6" width="4.5" height="1.0" fill="#e8e8e8"/><rect x="16.1" y="8.5" width="4.2" height="11.2" fill="#0c0c0c"/><rect x="16.1" y="13.6" width="4.2" height="1.0" fill="#e8e8e8"/><rect x="16.1" y="32.0" width="4.2" height="10.2" fill="#0c0c0c"/><rect x="16.1" y="36.6" width="4.2" height="1.0" fill="#e8e8e8"/><rect x="25.0" y="8.5" width="4.0" height="11.2" fill="#0c0c0c"/><rect x="25.0" y="13.6" width="4.0" height="1.0" fill="#e8e8e8"/><rect x="25.0" y="32.0" width="4.0" height="10.2" fill="#0c0c0c"/><rect x="25.0" y="36.6" width="4.0" height="1.0" fill="#e8e8e8"/><rect x="36.3" y="8.5" width="4.2" height="11.2" fill="#0c0c0c"/><rect x="36.3" y="13.6" width="4.2" height="1.0" fill="#e8e8e8"/><rect x="36.3" y="32.0" width="4.2" height="10.2" fill="#0c0c0c"/><rect x="36.3" y="36.6" width="4.2" height="1.0" fill="#e8e8e8"/><rect x="49.8" y="14.5" width="5.2" height="9.0" fill="#0c0c0c"/><rect x="49.8" y="18.5" width="5.2" height="1.0" fill="#e8e8e8"/><rect x="49.8" y="30.5" width="5.2" height="9.0" fill="#0c0c0c"/><rect x="49.8" y="34.5" width="5.2" height="1.0" fill="#e8e8e8"/><rect x="60.6" y="14.5" width="4.4" height="9.0" fill="#0c0c0c"/><rect x="60.6" y="18.5" width="4.4" height="1.0" fill="#e8e8e8"/><rect x="60.6" y="30.5" width="4.4" height="9.0" fill="#0c0c0c"/><rect x="60.6" y="34.5" width="4.4" height="1.0" fill="#e8e8e8"/><rect x="70.0" y="14.5" width="4.6" height="9.0" fill="#0c0c0c"/><rect x="70.0" y="18.5" width="4.6" height="1.0" fill="#e8e8e8"/><rect x="70.0" y="30.5" width="4.6" height="9.0" fill="#0c0c0c"/><rect x="70.0" y="34.5" width="4.6" height="1.0" fill="#e8e8e8"/><rect x="80.0" y="14.5" width="4.6" height="9.0" fill="#0c0c0c"/><rect x="80.0" y="18.5" width="4.6" height="1.0" fill="#e8e8e8"/><rect x="80.0" y="30.5" width="4.6" height="9.0" fill="#0c0c0c"/><rect x="80.0" y="34.5" width="4.6" height="1.0" fill="#e8e8e8"/><rect x="72.0" y="52.9" width="3.9" height="5.9" fill="#0c0c0c"/><rect x="72.0" y="55.3" width="3.9" height="1.0" fill="#9a9a9a"/><rect x="72.0" y="63.5" width="3.9" height="6.3" fill="#0c0c0c"/><rect x="72.0" y="66.2" width="3.9" height="1.0" fill="#9a9a9a"/><rect x="81.0" y="50.6" width="7.3" height="7.7" fill="#0c0c0c"/><rect x="81.0" y="54.0" width="7.3" height="1.0" fill="#9a9a9a"/><rect x="81.0" y="62.4" width="7.3" height="7.7" fill="#0c0c0c"/><rect x="81.0" y="65.8" width="7.3" height="1.0" fill="#9a9a9a"/><rect x="81.0" y="78.8" width="7.3" height="7.2" fill="#0c0c0c"/><rect x="81.0" y="81.9" width="7.3" height="1.0" fill="#9a9a9a"/></svg>
<div class="lb" style="left:381px;top:238.5px">Brownstone_Faca</div>
<div class="lb" style="left:381px;top:253.6px">de_Flr_1_Rough.j</div>
<div class="lb" style="left:381px;top:268.7px">peg</div>
<svg style="position:absolute;left:504px;top:145px;box-shadow:0 1px 2px rgba(0,0,0,0.3)" width="90" height="90" viewBox="0 0 90 90"><rect x="0.0" y="0.0" width="90.0" height="90.0" fill="#4d4d4d"/><rect x="45.0" y="0.0" width="45.0" height="44.5" fill="#484848"/><rect x="0.0" y="44.5" width="45.0" height="45.5" fill="#404040"/><rect x="45.0" y="44.5" width="22.5" height="45.5" fill="#3d3d3d"/><rect x="67.5" y="44.5" width="22.5" height="45.5" fill="#373737"/><rect x="0.0" y="67.0" width="22.2" height="23.0" fill="#505050"/><rect x="45.2" y="56.7" width="22.1" height="10.6" fill="#5a5a5a"/><rect x="3.3" y="7.7" width="6.1" height="12.8" fill="#2a2a2a"/><rect x="4.1" y="8.5" width="4.5" height="11.2" fill="#eeeeee"/><rect x="4.1" y="13.6" width="4.5" height="1.0" fill="#777"/><rect x="3.3" y="31.2" width="6.1" height="11.8" fill="#2a2a2a"/><rect x="4.1" y="32.0" width="4.5" height="10.2" fill="#eeeeee"/><rect x="4.1" y="36.6" width="4.5" height="1.0" fill="#777"/><rect x="15.3" y="7.7" width="5.8" height="12.8" fill="#2a2a2a"/><rect x="16.1" y="8.5" width="4.2" height="11.2" fill="#eeeeee"/><rect x="16.1" y="13.6" width="4.2" height="1.0" fill="#777"/><rect x="15.3" y="31.2" width="5.8" height="11.8" fill="#2a2a2a"/><rect x="16.1" y="32.0" width="4.2" height="10.2" fill="#eeeeee"/><rect x="16.1" y="36.6" width="4.2" height="1.0" fill="#777"/><rect x="24.2" y="7.7" width="5.6" height="12.8" fill="#2a2a2a"/><rect x="25.0" y="8.5" width="4.0" height="11.2" fill="#eeeeee"/><rect x="25.0" y="13.6" width="4.0" height="1.0" fill="#777"/><rect x="24.2" y="31.2" width="5.6" height="11.8" fill="#2a2a2a"/><rect x="25.0" y="32.0" width="4.0" height="10.2" fill="#eeeeee"/><rect x="25.0" y="36.6" width="4.0" height="1.0" fill="#777"/><rect x="35.5" y="7.7" width="5.8" height="12.8" fill="#2a2a2a"/><rect x="36.3" y="8.5" width="4.2" height="11.2" fill="#eeeeee"/><rect x="36.3" y="13.6" width="4.2" height="1.0" fill="#777"/><rect x="35.5" y="31.2" width="5.8" height="11.8" fill="#2a2a2a"/><rect x="36.3" y="32.0" width="4.2" height="10.2" fill="#eeeeee"/><rect x="36.3" y="36.6" width="4.2" height="1.0" fill="#777"/><rect x="49.0" y="13.7" width="6.8" height="10.6" fill="#2a2a2a"/><rect x="49.8" y="14.5" width="5.2" height="9.0" fill="#eeeeee"/><rect x="49.8" y="18.5" width="5.2" height="1.0" fill="#777"/><rect x="49.0" y="29.7" width="6.8" height="10.6" fill="#2a2a2a"/><rect x="49.8" y="30.5" width="5.2" height="9.0" fill="#eeeeee"/><rect x="49.8" y="34.5" width="5.2" height="1.0" fill="#777"/><rect x="59.8" y="13.7" width="6.0" height="10.6" fill="#2a2a2a"/><rect x="60.6" y="14.5" width="4.4" height="9.0" fill="#eeeeee"/><rect x="60.6" y="18.5" width="4.4" height="1.0" fill="#777"/><rect x="59.8" y="29.7" width="6.0" height="10.6" fill="#2a2a2a"/><rect x="60.6" y="30.5" width="4.4" height="9.0" fill="#eeeeee"/><rect x="60.6" y="34.5" width="4.4" height="1.0" fill="#777"/><rect x="69.2" y="13.7" width="6.2" height="10.6" fill="#2a2a2a"/><rect x="70.0" y="14.5" width="4.6" height="9.0" fill="#eeeeee"/><rect x="70.0" y="18.5" width="4.6" height="1.0" fill="#777"/><rect x="69.2" y="29.7" width="6.2" height="10.6" fill="#2a2a2a"/><rect x="70.0" y="30.5" width="4.6" height="9.0" fill="#eeeeee"/><rect x="70.0" y="34.5" width="4.6" height="1.0" fill="#777"/><rect x="79.2" y="13.7" width="6.2" height="10.6" fill="#2a2a2a"/><rect x="80.0" y="14.5" width="4.6" height="9.0" fill="#eeeeee"/><rect x="80.0" y="18.5" width="4.6" height="1.0" fill="#777"/><rect x="79.2" y="29.7" width="6.2" height="10.6" fill="#2a2a2a"/><rect x="80.0" y="30.5" width="4.6" height="9.0" fill="#eeeeee"/><rect x="80.0" y="34.5" width="4.6" height="1.0" fill="#777"/><rect x="71.2" y="52.1" width="5.5" height="7.5" fill="#2a2a2a"/><rect x="72.0" y="52.9" width="3.9" height="5.9" fill="#eeeeee"/><rect x="72.0" y="55.3" width="3.9" height="1.0" fill="#777"/><rect x="71.2" y="62.7" width="5.5" height="7.9" fill="#2a2a2a"/><rect x="72.0" y="63.5" width="3.9" height="6.3" fill="#eeeeee"/><rect x="72.0" y="66.2" width="3.9" height="1.0" fill="#777"/><rect x="80.2" y="49.8" width="8.9" height="9.3" fill="#2a2a2a"/><rect x="81.0" y="50.6" width="7.3" height="7.7" fill="#eeeeee"/><rect x="81.0" y="54.0" width="7.3" height="1.0" fill="#777"/><rect x="80.2" y="61.6" width="8.9" height="9.3" fill="#2a2a2a"/><rect x="81.0" y="62.4" width="7.3" height="7.7" fill="#eeeeee"/><rect x="81.0" y="65.8" width="7.3" height="1.0" fill="#777"/><rect x="80.2" y="78.0" width="8.9" height="8.8" fill="#2a2a2a"/><rect x="81.0" y="78.8" width="7.3" height="7.2" fill="#eeeeee"/><rect x="81.0" y="81.9" width="7.3" height="1.0" fill="#777"/></svg>
<div class="lb" style="left:489px;top:238.5px">Brownstone_Faca</div>
<div class="lb" style="left:489px;top:253.6px">de_Flr_1_Spec.jpe</div>
<div class="lb" style="left:489px;top:268.7px">g</div>
<svg style="position:absolute;left:612px;top:145px;box-shadow:0 1px 2px rgba(0,0,0,0.3)" width="90" height="90" viewBox="0 0 90 90"><rect x="0.0" y="0.0" width="90.0" height="90.0" fill="#8f5242"/><rect x="45.0" y="0.0" width="45.0" height="44.5" fill="#955645"/><rect x="0.0" y="44.5" width="45.0" height="45.5" fill="#81493d"/><rect x="45.0" y="44.5" width="45.0" height="45.5" fill="#874c3f"/><rect x="0.0" y="0.0" width="45.0" height="3.3" fill="#4d2f2c"/><rect x="45.0" y="0.0" width="45.0" height="4.0" fill="#6e5a50"/><rect x="40.0" y="5.0" width="5.0" height="40.0" fill="#cfcfcf"/><rect x="0.0" y="67.0" width="22.2" height="23.0" fill="#8e8e8e"/><rect x="45.0" y="45.0" width="45.0" height="8.4" fill="#2d3035"/><rect x="45.0" y="67.3" width="45.0" height="1.8" fill="#2d3035"/><rect x="2.4" y="6.8" width="8.4" height="14.3" fill="#5a4a3a"/><rect x="3.2" y="7.6" width="6.8" height="12.7" fill="#383a3a"/><rect x="2.4" y="24.9" width="8.4" height="15.1" fill="#5a4a3a"/><rect x="3.2" y="25.7" width="6.8" height="13.5" fill="#383a3a"/><rect x="15.4" y="6.8" width="8.2" height="14.3" fill="#5a4a3a"/><rect x="16.2" y="7.6" width="6.6" height="12.7" fill="#383a3a"/><rect x="15.4" y="24.9" width="8.2" height="15.1" fill="#5a4a3a"/><rect x="16.2" y="25.7" width="6.6" height="13.5" fill="#383a3a"/><rect x="28.4" y="6.8" width="8.2" height="14.3" fill="#5a4a3a"/><rect x="29.2" y="7.6" width="6.6" height="12.7" fill="#383a3a"/><rect x="28.4" y="24.9" width="8.2" height="15.1" fill="#5a4a3a"/><rect x="29.2" y="25.7" width="6.6" height="13.5" fill="#383a3a"/><rect x="52.2" y="10.1" width="7.4" height="13.5" fill="#5a4a3a"/><rect x="53.0" y="10.9" width="5.8" height="11.9" fill="#383a3a"/><rect x="52.2" y="30.6" width="7.4" height="13.5" fill="#5a4a3a"/><rect x="53.0" y="31.4" width="5.8" height="11.9" fill="#383a3a"/><rect x="66.2" y="10.1" width="7.6" height="13.5" fill="#5a4a3a"/><rect x="67.0" y="10.9" width="6.0" height="11.9" fill="#383a3a"/><rect x="66.2" y="30.6" width="7.6" height="13.5" fill="#5a4a3a"/><rect x="67.0" y="31.4" width="6.0" height="11.9" fill="#383a3a"/><rect x="80.5" y="10.1" width="7.3" height="13.5" fill="#5a4a3a"/><rect x="81.3" y="10.9" width="5.7" height="11.9" fill="#383a3a"/><rect x="80.5" y="30.6" width="7.3" height="13.5" fill="#5a4a3a"/><rect x="81.3" y="31.4" width="5.7" height="11.9" fill="#383a3a"/><rect x="49.2" y="56.1" width="7.4" height="11.8" fill="#5a4a3a"/><rect x="50.0" y="56.9" width="5.8" height="10.2" fill="#383a3a"/><rect x="49.2" y="72.4" width="7.4" height="12.8" fill="#5a4a3a"/><rect x="50.0" y="73.2" width="5.8" height="11.2" fill="#383a3a"/><rect x="60.0" y="56.1" width="7.3" height="11.8" fill="#5a4a3a"/><rect x="60.8" y="56.9" width="5.7" height="10.2" fill="#383a3a"/><rect x="60.0" y="72.4" width="7.3" height="12.8" fill="#5a4a3a"/><rect x="60.8" y="73.2" width="5.7" height="11.2" fill="#383a3a"/><rect x="68.2" y="56.1" width="7.3" height="11.8" fill="#5a4a3a"/><rect x="69.0" y="56.9" width="5.7" height="10.2" fill="#383a3a"/><rect x="68.2" y="72.4" width="7.3" height="12.8" fill="#5a4a3a"/><rect x="69.0" y="73.2" width="5.7" height="11.2" fill="#383a3a"/><rect x="79.2" y="56.1" width="7.3" height="11.8" fill="#5a4a3a"/><rect x="80.0" y="56.9" width="5.7" height="10.2" fill="#383a3a"/><rect x="79.2" y="72.4" width="7.3" height="12.8" fill="#5a4a3a"/><rect x="80.0" y="73.2" width="5.7" height="11.2" fill="#383a3a"/><rect x="4.0" y="8.8" width="5.2" height="5.7" fill="#a09888"/><rect x="30.0" y="8.8" width="5.0" height="5.7" fill="#a09888"/><rect x="17.0" y="26.9" width="5.0" height="6.1" fill="#a09888"/><rect x="30.0" y="26.9" width="5.0" height="6.1" fill="#a09888"/><rect x="53.8" y="12.1" width="4.2" height="5.4" fill="#a09888"/><rect x="67.8" y="12.1" width="4.4" height="5.4" fill="#a09888"/><rect x="67.8" y="32.6" width="4.4" height="5.4" fill="#a09888"/><rect x="82.1" y="32.6" width="4.1" height="5.4" fill="#a09888"/><rect x="50.8" y="58.1" width="4.2" height="4.6" fill="#a09888"/><rect x="61.6" y="58.1" width="4.1" height="4.6" fill="#a09888"/><rect x="80.8" y="58.1" width="4.1" height="4.6" fill="#a09888"/><rect x="61.6" y="74.4" width="4.1" height="5.0" fill="#a09888"/></svg>
<div class="lb" style="left:597px;top:238.5px">Brownstone_Faca</div>
<div class="lb" style="left:597px;top:253.6px">de_Flr_2_Dif.jpeg</div>
<svg style="position:absolute;left:720px;top:145px;box-shadow:0 1px 2px rgba(0,0,0,0.3)" width="90" height="90" viewBox="0 0 90 90"><rect x="0.0" y="0.0" width="90.0" height="90.0" fill="#cfcfcf"/><rect x="45.0" y="0.0" width="45.0" height="44.5" fill="#d0d0d0"/><rect x="0.0" y="44.5" width="45.0" height="45.5" fill="#cdcdcd"/><rect x="45.0" y="44.5" width="45.0" height="45.5" fill="#cfcfcf"/><rect x="0.0" y="0.0" width="45.0" height="3.3" fill="#c8c8c8"/><rect x="45.0" y="0.0" width="45.0" height="4.0" fill="#c6c6c6"/><rect x="40.0" y="5.0" width="5.0" height="40.0" fill="#d6d6d6"/><rect x="45.0" y="45.0" width="45.0" height="8.4" fill="#c4c4c4"/><rect x="45.0" y="67.3" width="45.0" height="1.8" fill="#c4c4c4"/><rect x="3.2" y="7.6" width="6.8" height="12.7" fill="#a0a0a0"/><rect x="3.2" y="13.4" width="6.8" height="1.0" fill="#b8b8b8"/><rect x="3.2" y="25.7" width="6.8" height="13.5" fill="#a0a0a0"/><rect x="3.2" y="32.0" width="6.8" height="1.0" fill="#b8b8b8"/><rect x="16.2" y="7.6" width="6.6" height="12.7" fill="#a0a0a0"/><rect x="16.2" y="13.4" width="6.6" height="1.0" fill="#b8b8b8"/><rect x="16.2" y="25.7" width="6.6" height="13.5" fill="#a0a0a0"/><rect x="16.2" y="32.0" width="6.6" height="1.0" fill="#b8b8b8"/><rect x="29.2" y="7.6" width="6.6" height="12.7" fill="#a0a0a0"/><rect x="29.2" y="13.4" width="6.6" height="1.0" fill="#b8b8b8"/><rect x="29.2" y="25.7" width="6.6" height="13.5" fill="#a0a0a0"/><rect x="29.2" y="32.0" width="6.6" height="1.0" fill="#b8b8b8"/><rect x="53.0" y="10.9" width="5.8" height="11.9" fill="#a0a0a0"/><rect x="53.0" y="16.4" width="5.8" height="1.0" fill="#b8b8b8"/><rect x="53.0" y="31.4" width="5.8" height="11.9" fill="#a0a0a0"/><rect x="53.0" y="36.8" width="5.8" height="1.0" fill="#b8b8b8"/><rect x="67.0" y="10.9" width="6.0" height="11.9" fill="#a0a0a0"/><rect x="67.0" y="16.4" width="6.0" height="1.0" fill="#b8b8b8"/><rect x="67.0" y="31.4" width="6.0" height="11.9" fill="#a0a0a0"/><rect x="67.0" y="36.8" width="6.0" height="1.0" fill="#b8b8b8"/><rect x="81.3" y="10.9" width="5.7" height="11.9" fill="#a0a0a0"/><rect x="81.3" y="16.4" width="5.7" height="1.0" fill="#b8b8b8"/><rect x="81.3" y="31.4" width="5.7" height="11.9" fill="#a0a0a0"/><rect x="81.3" y="36.8" width="5.7" height="1.0" fill="#b8b8b8"/><rect x="50.0" y="56.9" width="5.8" height="10.2" fill="#a0a0a0"/><rect x="50.0" y="61.5" width="5.8" height="1.0" fill="#b8b8b8"/><rect x="50.0" y="73.2" width="5.8" height="11.2" fill="#a0a0a0"/><rect x="50.0" y="78.3" width="5.8" height="1.0" fill="#b8b8b8"/><rect x="60.8" y="56.9" width="5.7" height="10.2" fill="#a0a0a0"/><rect x="60.8" y="61.5" width="5.7" height="1.0" fill="#b8b8b8"/><rect x="60.8" y="73.2" width="5.7" height="11.2" fill="#a0a0a0"/><rect x="60.8" y="78.3" width="5.7" height="1.0" fill="#b8b8b8"/><rect x="69.0" y="56.9" width="5.7" height="10.2" fill="#a0a0a0"/><rect x="69.0" y="61.5" width="5.7" height="1.0" fill="#b8b8b8"/><rect x="69.0" y="73.2" width="5.7" height="11.2" fill="#a0a0a0"/><rect x="69.0" y="78.3" width="5.7" height="1.0" fill="#b8b8b8"/><rect x="80.0" y="56.9" width="5.7" height="10.2" fill="#a0a0a0"/><rect x="80.0" y="61.5" width="5.7" height="1.0" fill="#b8b8b8"/><rect x="80.0" y="73.2" width="5.7" height="11.2" fill="#a0a0a0"/><rect x="80.0" y="78.3" width="5.7" height="1.0" fill="#b8b8b8"/></svg>
<div class="lb" style="left:705px;top:238.5px">Brownstone_Faca</div>
<div class="lb" style="left:705px;top:253.6px">de_Flr_2_Height.j</div>
<div class="lb" style="left:705px;top:268.7px">peg</div>
<svg style="position:absolute;left:828px;top:145px;box-shadow:0 1px 2px rgba(0,0,0,0.3)" width="90" height="90" viewBox="0 0 90 90"><rect x="0.0" y="0.0" width="90.0" height="90.0" fill="#fff"/><rect x="3.9" y="8.4" width="4.9" height="11.0" fill="#0c0c0c"/><rect x="3.9" y="13.4" width="4.9" height="1.0" fill="#d0d0d0"/><rect x="3.9" y="27.0" width="4.9" height="10.6" fill="#0c0c0c"/><rect x="3.9" y="31.8" width="4.9" height="1.0" fill="#d0d0d0"/><rect x="16.6" y="8.4" width="5.0" height="11.0" fill="#0c0c0c"/><rect x="16.6" y="13.4" width="5.0" height="1.0" fill="#d0d0d0"/><rect x="16.6" y="27.0" width="5.0" height="10.6" fill="#0c0c0c"/><rect x="16.6" y="31.8" width="5.0" height="1.0" fill="#d0d0d0"/><rect x="30.3" y="8.4" width="4.6" height="11.0" fill="#0c0c0c"/><rect x="30.3" y="13.4" width="4.6" height="1.0" fill="#d0d0d0"/><rect x="30.3" y="27.0" width="4.6" height="10.6" fill="#0c0c0c"/><rect x="30.3" y="31.8" width="4.6" height="1.0" fill="#d0d0d0"/><rect x="53.0" y="10.9" width="5.8" height="11.9" fill="#0c0c0c"/><rect x="53.0" y="31.4" width="5.8" height="11.9" fill="#0c0c0c"/><rect x="67.0" y="10.9" width="6.0" height="11.9" fill="#0c0c0c"/><rect x="67.0" y="31.4" width="6.0" height="11.9" fill="#0c0c0c"/><rect x="81.3" y="10.9" width="5.7" height="11.9" fill="#0c0c0c"/><rect x="81.3" y="31.4" width="5.7" height="11.9" fill="#0c0c0c"/><rect x="50.0" y="56.9" width="5.8" height="10.2" fill="#0c0c0c"/><rect x="50.0" y="73.2" width="5.8" height="11.2" fill="#0c0c0c"/><rect x="60.8" y="56.9" width="5.7" height="10.2" fill="#0c0c0c"/><rect x="60.8" y="73.2" width="5.7" height="11.2" fill="#0c0c0c"/><rect x="69.0" y="56.9" width="5.7" height="10.2" fill="#0c0c0c"/><rect x="69.0" y="73.2" width="5.7" height="11.2" fill="#0c0c0c"/><rect x="80.0" y="56.9" width="5.7" height="10.2" fill="#0c0c0c"/><rect x="80.0" y="73.2" width="5.7" height="11.2" fill="#0c0c0c"/></svg>
<div class="lb" style="left:813px;top:238.5px">Brownstone_Faca</div>
<div class="lb" style="left:813px;top:253.6px">de_Flr_2_Rough.j</div>
<div class="lb" style="left:813px;top:268.7px">peg</div>
<svg style="position:absolute;left:180px;top:291.5px;box-shadow:0 1px 2px rgba(0,0,0,0.3)" width="90" height="90" viewBox="0 0 90 90"><rect x="0.0" y="0.0" width="90.0" height="90.0" fill="#fff"/><rect x="4.8" y="8.6" width="3.8" height="10.4" fill="#111"/><rect x="4.8" y="13.3" width="3.8" height="1.0" fill="#cfcfcf"/><rect x="4.8" y="28.0" width="3.8" height="11.0" fill="#111"/><rect x="4.8" y="33.0" width="3.8" height="1.0" fill="#cfcfcf"/><rect x="15.2" y="8.6" width="3.8" height="10.4" fill="#111"/><rect x="15.2" y="13.3" width="3.8" height="1.0" fill="#cfcfcf"/><rect x="15.2" y="28.0" width="3.8" height="11.0" fill="#111"/><rect x="15.2" y="33.0" width="3.8" height="1.0" fill="#cfcfcf"/><rect x="25.7" y="8.6" width="3.8" height="10.4" fill="#111"/><rect x="25.7" y="13.3" width="3.8" height="1.0" fill="#cfcfcf"/><rect x="25.7" y="28.0" width="3.8" height="11.0" fill="#111"/><rect x="25.7" y="33.0" width="3.8" height="1.0" fill="#cfcfcf"/><rect x="35.8" y="8.6" width="4.2" height="10.4" fill="#111"/><rect x="35.8" y="13.3" width="4.2" height="1.0" fill="#cfcfcf"/><rect x="35.8" y="28.0" width="4.2" height="11.0" fill="#111"/><rect x="35.8" y="33.0" width="4.2" height="1.0" fill="#cfcfcf"/><rect x="49.5" y="6.7" width="3.8" height="9.5" fill="#111"/><rect x="49.5" y="10.9" width="3.8" height="1.0" fill="#cfcfcf"/><rect x="49.5" y="26.6" width="3.8" height="9.4" fill="#111"/><rect x="49.5" y="30.8" width="3.8" height="1.0" fill="#cfcfcf"/><rect x="60.5" y="6.7" width="3.8" height="9.5" fill="#111"/><rect x="60.5" y="10.9" width="3.8" height="1.0" fill="#cfcfcf"/><rect x="60.5" y="26.6" width="3.8" height="9.4" fill="#111"/><rect x="60.5" y="30.8" width="3.8" height="1.0" fill="#cfcfcf"/><rect x="70.4" y="6.7" width="3.8" height="9.5" fill="#111"/><rect x="70.4" y="10.9" width="3.8" height="1.0" fill="#cfcfcf"/><rect x="70.4" y="26.6" width="3.8" height="9.4" fill="#111"/><rect x="70.4" y="30.8" width="3.8" height="1.0" fill="#cfcfcf"/><rect x="80.8" y="6.7" width="4.2" height="9.5" fill="#111"/><rect x="80.8" y="10.9" width="4.2" height="1.0" fill="#cfcfcf"/><rect x="80.8" y="26.6" width="4.2" height="9.4" fill="#111"/><rect x="80.8" y="30.8" width="4.2" height="1.0" fill="#cfcfcf"/></svg>
<svg style="position:absolute;left:288px;top:291.5px;box-shadow:0 1px 2px rgba(0,0,0,0.3)" width="90" height="90" viewBox="0 0 90 90"><rect x="0.0" y="0.0" width="90.0" height="90.0" fill="#4a4a4a"/><rect x="4.8" y="8.6" width="3.8" height="10.4" fill="#f2f2f2"/><rect x="4.8" y="13.3" width="3.8" height="1.0" fill="#9a9a9a"/><rect x="4.8" y="28.0" width="3.8" height="11.0" fill="#f2f2f2"/><rect x="4.8" y="33.0" width="3.8" height="1.0" fill="#9a9a9a"/><rect x="15.2" y="8.6" width="3.8" height="10.4" fill="#f2f2f2"/><rect x="15.2" y="13.3" width="3.8" height="1.0" fill="#9a9a9a"/><rect x="15.2" y="28.0" width="3.8" height="11.0" fill="#f2f2f2"/><rect x="15.2" y="33.0" width="3.8" height="1.0" fill="#9a9a9a"/><rect x="25.7" y="8.6" width="3.8" height="10.4" fill="#f2f2f2"/><rect x="25.7" y="13.3" width="3.8" height="1.0" fill="#9a9a9a"/><rect x="25.7" y="28.0" width="3.8" height="11.0" fill="#f2f2f2"/><rect x="25.7" y="33.0" width="3.8" height="1.0" fill="#9a9a9a"/><rect x="35.8" y="8.6" width="4.2" height="10.4" fill="#f2f2f2"/><rect x="35.8" y="13.3" width="4.2" height="1.0" fill="#9a9a9a"/><rect x="35.8" y="28.0" width="4.2" height="11.0" fill="#f2f2f2"/><rect x="35.8" y="33.0" width="4.2" height="1.0" fill="#9a9a9a"/><rect x="49.5" y="6.7" width="3.8" height="9.5" fill="#f2f2f2"/><rect x="49.5" y="10.9" width="3.8" height="1.0" fill="#9a9a9a"/><rect x="49.5" y="26.6" width="3.8" height="9.4" fill="#f2f2f2"/><rect x="49.5" y="30.8" width="3.8" height="1.0" fill="#9a9a9a"/><rect x="60.5" y="6.7" width="3.8" height="9.5" fill="#f2f2f2"/><rect x="60.5" y="10.9" width="3.8" height="1.0" fill="#9a9a9a"/><rect x="60.5" y="26.6" width="3.8" height="9.4" fill="#f2f2f2"/><rect x="60.5" y="30.8" width="3.8" height="1.0" fill="#9a9a9a"/><rect x="70.4" y="6.7" width="3.8" height="9.5" fill="#f2f2f2"/><rect x="70.4" y="10.9" width="3.8" height="1.0" fill="#9a9a9a"/><rect x="70.4" y="26.6" width="3.8" height="9.4" fill="#f2f2f2"/><rect x="70.4" y="30.8" width="3.8" height="1.0" fill="#9a9a9a"/><rect x="80.8" y="6.7" width="4.2" height="9.5" fill="#f2f2f2"/><rect x="80.8" y="10.9" width="4.2" height="1.0" fill="#9a9a9a"/><rect x="80.8" y="26.6" width="4.2" height="9.4" fill="#f2f2f2"/><rect x="80.8" y="30.8" width="4.2" height="1.0" fill="#9a9a9a"/></svg>
<svg style="position:absolute;left:396px;top:291.5px;box-shadow:0 1px 2px rgba(0,0,0,0.3)" width="90" height="90" viewBox="0 0 90 90"><rect x="0.0" y="0.0" width="90.0" height="90.0" fill="#d6d1c6"/><rect x="45.0" y="0.0" width="45.0" height="90.0" fill="#bab6b2"/><rect x="0.0" y="0.0" width="45.0" height="3.0" fill="#bdbdbd"/><rect x="0.0" y="28.5" width="45.0" height="3.8" fill="#9a5a40"/><rect x="0.0" y="32.3" width="45.0" height="58.0" fill="#a9b0ae"/><rect x="3.0" y="10.6" width="7.3" height="14.9" fill="#8a8078"/><rect x="3.8" y="11.4" width="5.7" height="13.3" fill="#4d4240"/><rect x="13.5" y="10.6" width="7.3" height="14.9" fill="#8a8078"/><rect x="14.3" y="11.4" width="5.7" height="13.3" fill="#4d4240"/><rect x="23.5" y="10.6" width="7.3" height="14.9" fill="#8a8078"/><rect x="24.3" y="11.4" width="5.7" height="13.3" fill="#4d4240"/><rect x="33.4" y="10.6" width="7.4" height="14.9" fill="#8a8078"/><rect x="34.2" y="11.4" width="5.8" height="13.3" fill="#4d4240"/><rect x="55.2" y="2.1" width="7.4" height="13.9" fill="#8a8078"/><rect x="56.0" y="2.9" width="5.8" height="12.3" fill="#4d4240"/><rect x="55.2" y="23.9" width="7.4" height="14.0" fill="#8a8078"/><rect x="56.0" y="24.7" width="5.8" height="12.4" fill="#4d4240"/><rect x="63.9" y="2.1" width="7.3" height="13.9" fill="#8a8078"/><rect x="64.7" y="2.9" width="5.7" height="12.3" fill="#4d4240"/><rect x="63.9" y="23.9" width="7.3" height="14.0" fill="#8a8078"/><rect x="64.7" y="24.7" width="5.7" height="12.4" fill="#4d4240"/><rect x="73.0" y="2.1" width="7.3" height="13.9" fill="#8a8078"/><rect x="73.8" y="2.9" width="5.7" height="12.3" fill="#4d4240"/><rect x="73.0" y="23.9" width="7.3" height="14.0" fill="#8a8078"/><rect x="73.8" y="24.7" width="5.7" height="12.4" fill="#4d4240"/><rect x="50.0" y="16.2" width="38.0" height="1.4" fill="#7a5050"/><rect x="50.0" y="21.9" width="38.0" height="1.4" fill="#7a5050"/></svg>
<svg style="position:absolute;left:504px;top:291.5px;box-shadow:0 1px 2px rgba(0,0,0,0.3)" width="90" height="90" viewBox="0 0 90 90"><rect x="0.0" y="0.0" width="90.0" height="90.0" fill="#f4f4f4"/><rect x="45.0" y="0.0" width="45.0" height="90.0" fill="#fbfbfb"/><rect x="0.0" y="0.0" width="45.0" height="3.0" fill="#e0e0e0"/><rect x="0.0" y="28.5" width="45.0" height="3.8" fill="#e6e6e6"/><rect x="0.0" y="32.3" width="45.0" height="58.0" fill="#f0f0f0"/><rect x="3.8" y="11.4" width="5.7" height="13.3" fill="#8c8c8c"/><rect x="14.3" y="11.4" width="5.7" height="13.3" fill="#8c8c8c"/><rect x="24.3" y="11.4" width="5.7" height="13.3" fill="#8c8c8c"/><rect x="34.2" y="11.4" width="5.8" height="13.3" fill="#8c8c8c"/><rect x="56.0" y="2.9" width="5.8" height="12.3" fill="#8c8c8c"/><rect x="56.0" y="24.7" width="5.8" height="12.4" fill="#8c8c8c"/><rect x="64.7" y="2.9" width="5.7" height="12.3" fill="#8c8c8c"/><rect x="64.7" y="24.7" width="5.7" height="12.4" fill="#8c8c8c"/><rect x="73.8" y="2.9" width="5.7" height="12.3" fill="#8c8c8c"/><rect x="73.8" y="24.7" width="5.7" height="12.4" fill="#8c8c8c"/><rect x="50.0" y="16.2" width="38.0" height="1.4" fill="#e0e0e0"/><rect x="50.0" y="21.9" width="38.0" height="1.4" fill="#e0e0e0"/></svg>
<svg style="position:absolute;left:612px;top:291.5px;box-shadow:0 1px 2px rgba(0,0,0,0.3)" width="90" height="90" viewBox="0 0 90 90"><rect x="0.0" y="0.0" width="90.0" height="90.0" fill="#fff"/><rect x="4.1" y="15.6" width="5.1" height="8.4" fill="#0c0c0c"/><rect x="4.1" y="19.3" width="5.1" height="1.0" fill="#bbb"/><rect x="14.2" y="15.6" width="5.3" height="8.4" fill="#0c0c0c"/><rect x="14.2" y="19.3" width="5.3" height="1.0" fill="#bbb"/><rect x="24.0" y="15.6" width="5.3" height="8.4" fill="#0c0c0c"/><rect x="24.0" y="19.3" width="5.3" height="1.0" fill="#bbb"/><rect x="34.8" y="15.6" width="4.6" height="8.4" fill="#0c0c0c"/><rect x="34.8" y="19.3" width="4.6" height="1.0" fill="#bbb"/><rect x="56.0" y="3.4" width="6.0" height="11.5" fill="#0c0c0c"/><rect x="56.0" y="8.7" width="6.0" height="1.0" fill="#ccc"/><rect x="56.0" y="26.4" width="6.0" height="11.4" fill="#0c0c0c"/><rect x="56.0" y="31.6" width="6.0" height="1.0" fill="#ccc"/><rect x="64.6" y="3.4" width="6.0" height="11.5" fill="#0c0c0c"/><rect x="64.6" y="8.7" width="6.0" height="1.0" fill="#ccc"/><rect x="64.6" y="26.4" width="6.0" height="11.4" fill="#0c0c0c"/><rect x="64.6" y="31.6" width="6.0" height="1.0" fill="#ccc"/><rect x="73.8" y="3.4" width="5.5" height="11.5" fill="#0c0c0c"/><rect x="73.8" y="8.7" width="5.5" height="1.0" fill="#ccc"/><rect x="73.8" y="26.4" width="5.5" height="11.4" fill="#0c0c0c"/><rect x="73.8" y="31.6" width="5.5" height="1.0" fill="#ccc"/></svg>
<svg style="position:absolute;left:720px;top:291.5px;box-shadow:0 1px 2px rgba(0,0,0,0.3)" width="90" height="90" viewBox="0 0 90 90"><rect x="0.0" y="0.0" width="90.0" height="90.0" fill="#545454"/><rect x="0.0" y="0.0" width="45.0" height="90.0" fill="#4e4e4e"/><rect x="3.3" y="14.8" width="6.7" height="10.0" fill="#3a3a3a"/><rect x="4.1" y="15.6" width="5.1" height="8.4" fill="#f0f0f0"/><rect x="4.1" y="19.3" width="5.1" height="1.0" fill="#999"/><rect x="13.4" y="14.8" width="6.9" height="10.0" fill="#3a3a3a"/><rect x="14.2" y="15.6" width="5.3" height="8.4" fill="#f0f0f0"/><rect x="14.2" y="19.3" width="5.3" height="1.0" fill="#999"/><rect x="23.2" y="14.8" width="6.9" height="10.0" fill="#3a3a3a"/><rect x="24.0" y="15.6" width="5.3" height="8.4" fill="#f0f0f0"/><rect x="24.0" y="19.3" width="5.3" height="1.0" fill="#999"/><rect x="34.0" y="14.8" width="6.2" height="10.0" fill="#3a3a3a"/><rect x="34.8" y="15.6" width="4.6" height="8.4" fill="#f0f0f0"/><rect x="34.8" y="19.3" width="4.6" height="1.0" fill="#999"/><rect x="55.2" y="2.6" width="7.6" height="13.1" fill="#3a3a3a"/><rect x="56.0" y="3.4" width="6.0" height="11.5" fill="#f4f4f4"/><rect x="56.0" y="8.7" width="6.0" height="1.0" fill="#aaa"/><rect x="55.2" y="25.6" width="7.6" height="13.0" fill="#3a3a3a"/><rect x="56.0" y="26.4" width="6.0" height="11.4" fill="#f4f4f4"/><rect x="56.0" y="31.6" width="6.0" height="1.0" fill="#aaa"/><rect x="63.8" y="2.6" width="7.6" height="13.1" fill="#3a3a3a"/><rect x="64.6" y="3.4" width="6.0" height="11.5" fill="#f4f4f4"/><rect x="64.6" y="8.7" width="6.0" height="1.0" fill="#aaa"/><rect x="63.8" y="25.6" width="7.6" height="13.0" fill="#3a3a3a"/><rect x="64.6" y="26.4" width="6.0" height="11.4" fill="#f4f4f4"/><rect x="64.6" y="31.6" width="6.0" height="1.0" fill="#aaa"/><rect x="73.0" y="2.6" width="7.1" height="13.1" fill="#3a3a3a"/><rect x="73.8" y="3.4" width="5.5" height="11.5" fill="#f4f4f4"/><rect x="73.8" y="8.7" width="5.5" height="1.0" fill="#aaa"/><rect x="73.0" y="25.6" width="7.1" height="13.0" fill="#3a3a3a"/><rect x="73.8" y="26.4" width="5.5" height="11.4" fill="#f4f4f4"/><rect x="73.8" y="31.6" width="5.5" height="1.0" fill="#aaa"/></svg>
<svg style="position:absolute;left:828px;top:291.5px;box-shadow:0 1px 2px rgba(0,0,0,0.3)" width="90" height="90" viewBox="0 0 90 90"><rect x="0.0" y="0.0" width="90.0" height="90.0" fill="#b39454"/><rect x="2.0" y="2.6" width="6.2" height="14.7" fill="#8a7040"/><rect x="2.8" y="3.4" width="4.6" height="13.1" fill="#3a342c"/><rect x="2.0" y="23.2" width="6.2" height="15.4" fill="#8a7040"/><rect x="2.8" y="24.0" width="4.6" height="13.8" fill="#3a342c"/><rect x="13.5" y="2.6" width="6.2" height="14.7" fill="#8a7040"/><rect x="14.3" y="3.4" width="4.6" height="13.1" fill="#3a342c"/><rect x="13.5" y="23.2" width="6.2" height="15.4" fill="#8a7040"/><rect x="14.3" y="24.0" width="4.6" height="13.8" fill="#3a342c"/><rect x="25.0" y="2.6" width="6.8" height="14.7" fill="#8a7040"/><rect x="25.8" y="3.4" width="5.2" height="13.1" fill="#3a342c"/><rect x="25.0" y="23.2" width="6.8" height="15.4" fill="#8a7040"/><rect x="25.8" y="24.0" width="5.2" height="13.8" fill="#3a342c"/><rect x="0.0" y="19.0" width="40.0" height="1.5" fill="#9a7e48"/></svg>

</div>

</body></html>
